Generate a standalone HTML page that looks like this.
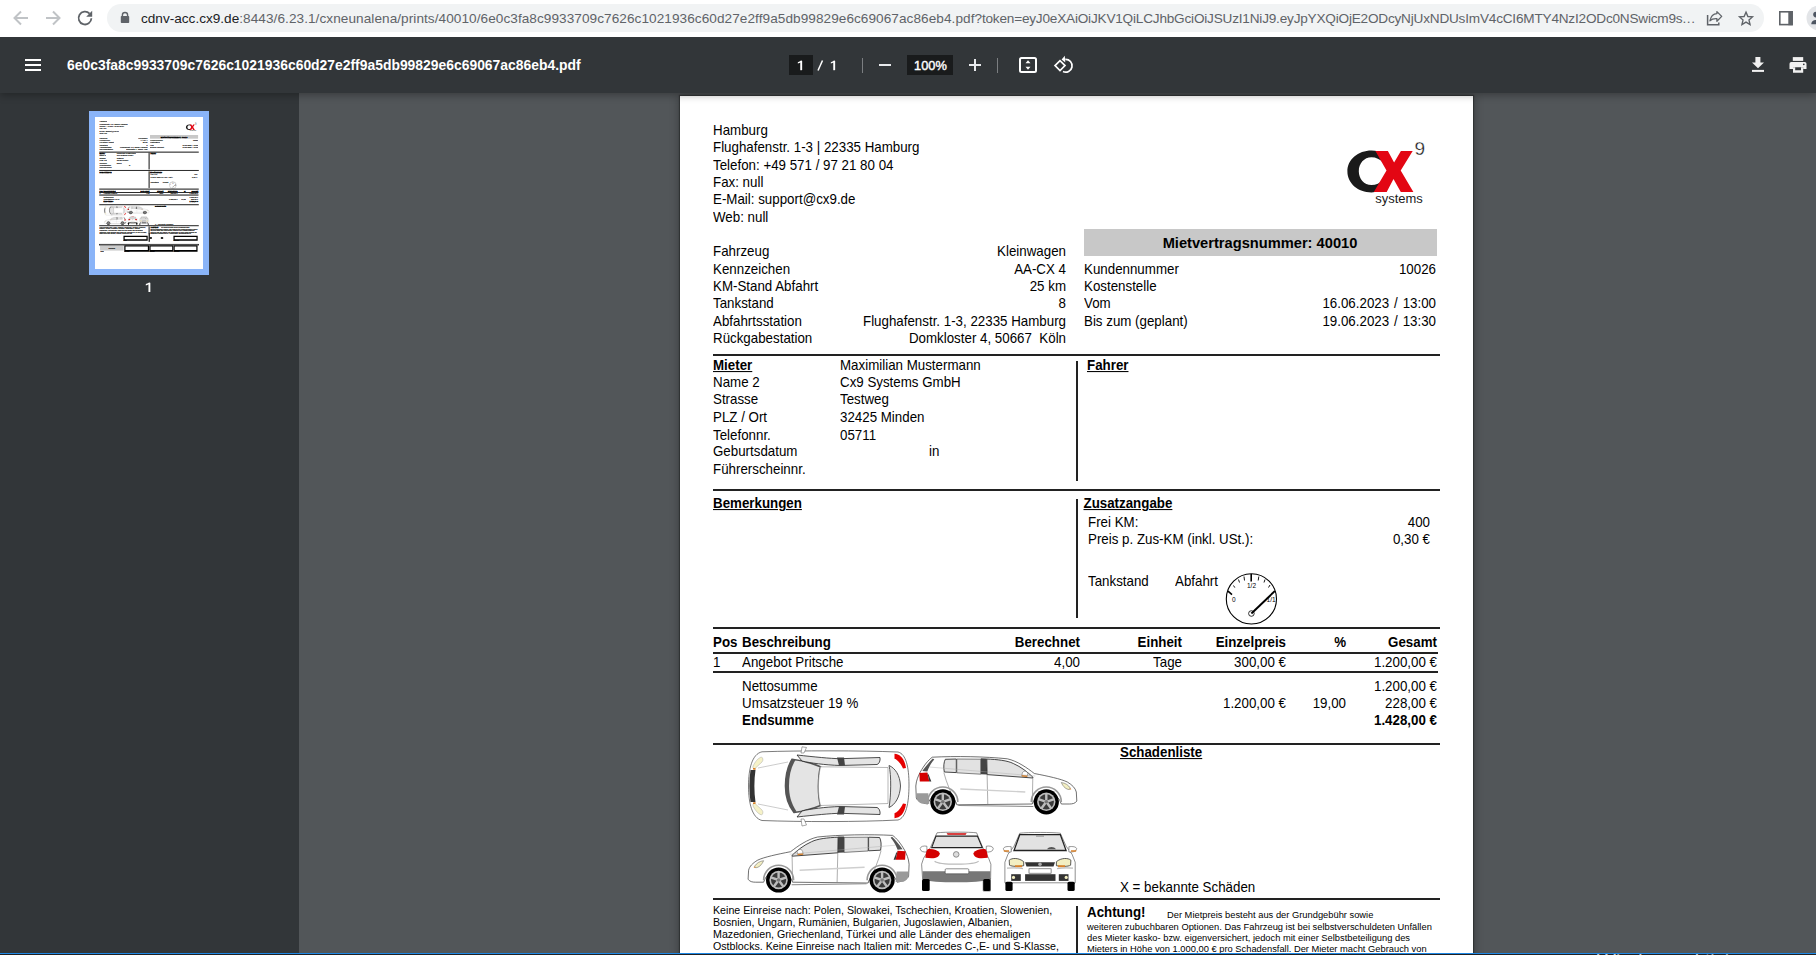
<!<div class="t" style="left:713px;top:123.62px;font-size:13.33px;font-weight:normal;color:#000;">Hamburg</div>
<div class="t" style="left:713px;top:141.06px;font-size:13.33px;font-weight:normal;color:#000;">Flughafenstr. 1-3 | 22335 Hamburg</div>
<div class="t" style="left:713px;top:158.50px;font-size:13.33px;font-weight:normal;color:#000;">Telefon: +49 571 / 97 21 80 04</div>
<div class="t" style="left:713px;top:175.94px;font-size:13.33px;font-weight:normal;color:#000;">Fax: null</div>
<div class="t" style="left:713px;top:193.38px;font-size:13.33px;font-weight:normal;color:#000;">E-Mail: support@cx9.de</div>
<div class="t" style="left:713px;top:210.82px;font-size:13.33px;font-weight:normal;color:#000;">Web: null</div>
<div class="t" style="left:713px;top:244.72px;font-size:13.33px;font-weight:normal;color:#000;">Fahrzeug</div>
<div class="t" style="right:750px;top:244.72px;font-size:13.33px;font-weight:normal;color:#000;">Kleinwagen</div>
<div class="t" style="left:713px;top:262.92px;font-size:13.33px;font-weight:normal;color:#000;">Kennzeichen</div>
<div class="t" style="right:750px;top:262.92px;font-size:13.33px;font-weight:normal;color:#000;">AA-CX 4</div>
<div class="t" style="left:713px;top:279.62px;font-size:13.33px;font-weight:normal;color:#000;">KM-Stand Abfahrt</div>
<div class="t" style="right:750px;top:279.62px;font-size:13.33px;font-weight:normal;color:#000;">25 km</div>
<div class="t" style="left:713px;top:297.02px;font-size:13.33px;font-weight:normal;color:#000;">Tankstand</div>
<div class="t" style="right:750px;top:297.02px;font-size:13.33px;font-weight:normal;color:#000;">8</div>
<div class="t" style="left:713px;top:315.22px;font-size:13.33px;font-weight:normal;color:#000;">Abfahrtsstation</div>
<div class="t" style="right:750px;top:315.22px;font-size:13.33px;font-weight:normal;color:#000;">Flughafenstr. 1-3, 22335 Hamburg</div>
<div class="t" style="left:713px;top:331.92px;font-size:13.33px;font-weight:normal;color:#000;">Rückgabestation</div>
<div class="t" style="right:750px;top:331.92px;font-size:13.33px;font-weight:normal;color:#000;">Domkloster 4, 50667&nbsp; Köln</div>
<div class="r" style="left:1084px;top:229px;width:353px;height:27px;background:#c8c8c8;"></div>
<div class="t" style="left:960px;width:600px;text-align:center;top:235.58px;font-size:14.67px;font-weight:bold;color:#000;">Mietvertragsnummer: 40010</div>
<div class="t" style="left:1084px;top:262.92px;font-size:13.33px;font-weight:normal;color:#000;">Kundennummer</div>
<div class="t" style="right:380px;top:262.92px;font-size:13.33px;font-weight:normal;color:#000;">10026</div>
<div class="t" style="left:1084px;top:279.62px;font-size:13.33px;font-weight:normal;color:#000;">Kostenstelle</div>
<div class="t" style="left:1084px;top:297.02px;font-size:13.33px;font-weight:normal;color:#000;">Vom</div>
<div class="t" style="right:380px;top:297.02px;font-size:13.33px;font-weight:normal;color:#000;word-spacing:1.2px;">16.06.2023 / 13:00</div>
<div class="t" style="left:1084px;top:315.22px;font-size:13.33px;font-weight:normal;color:#000;">Bis zum (geplant)</div>
<div class="t" style="right:380px;top:315.22px;font-size:13.33px;font-weight:normal;color:#000;word-spacing:1.2px;">19.06.2023 / 13:30</div>
<div class="r ln" style="left:713px;top:354px;width:727px;height:2px;background:#222;"></div>
<div class="t" style="left:713px;top:358.72px;font-size:13.33px;font-weight:bold;color:#000;text-decoration:underline;text-decoration-thickness:1px;text-underline-offset:1px;">Mieter</div>
<div class="t" style="left:840px;top:358.72px;font-size:13.33px;font-weight:normal;color:#000;">Maximilian Mustermann</div>
<div class="t" style="left:713px;top:376.12px;font-size:13.33px;font-weight:normal;color:#000;">Name 2</div>
<div class="t" style="left:840px;top:376.12px;font-size:13.33px;font-weight:normal;color:#000;">Cx9 Systems GmbH</div>
<div class="t" style="left:713px;top:392.62px;font-size:13.33px;font-weight:normal;color:#000;">Strasse</div>
<div class="t" style="left:840px;top:392.62px;font-size:13.33px;font-weight:normal;color:#000;">Testweg</div>
<div class="t" style="left:713px;top:411.02px;font-size:13.33px;font-weight:normal;color:#000;">PLZ / Ort</div>
<div class="t" style="left:840px;top:411.02px;font-size:13.33px;font-weight:normal;color:#000;">32425 Minden</div>
<div class="t" style="left:713px;top:428.52px;font-size:13.33px;font-weight:normal;color:#000;">Telefonnr.</div>
<div class="t" style="left:840px;top:428.52px;font-size:13.33px;font-weight:normal;color:#000;">05711</div>
<div class="t" style="left:713px;top:445.42px;font-size:13.33px;font-weight:normal;color:#000;">Geburtsdatum</div>
<div class="t" style="left:713px;top:463.32px;font-size:13.33px;font-weight:normal;color:#000;">Führerscheinnr.</div>
<div class="t" style="left:929px;top:445.42px;font-size:13.33px;font-weight:normal;color:#000;">in</div>
<div class="r ln" style="left:1076px;top:361px;width:2px;height:120px;background:#222;"></div>
<div class="t" style="left:1087px;top:358.72px;font-size:13.33px;font-weight:bold;color:#000;text-decoration:underline;text-decoration-thickness:1px;text-underline-offset:1px;">Fahrer</div>
<div class="r ln" style="left:713px;top:489px;width:727px;height:2px;background:#222;"></div>
<div class="t" style="left:713px;top:496.72px;font-size:13.33px;font-weight:bold;color:#000;text-decoration:underline;text-decoration-thickness:1px;text-underline-offset:1px;">Bemerkungen</div>
<div class="r ln" style="left:1076px;top:499px;width:2px;height:119px;background:#222;"></div>
<div class="t" style="left:1083.5px;top:496.72px;font-size:13.33px;font-weight:bold;color:#000;text-decoration:underline;text-decoration-thickness:1px;text-underline-offset:1px;">Zusatzangabe</div>
<div class="t" style="left:1088px;top:515.72px;font-size:13.33px;font-weight:normal;color:#000;">Frei KM:</div>
<div class="t" style="right:386px;top:515.72px;font-size:13.33px;font-weight:normal;color:#000;">400</div>
<div class="t" style="left:1088px;top:532.72px;font-size:13.33px;font-weight:normal;color:#000;">Preis p. Zus-KM (inkl. USt.):</div>
<div class="t" style="right:386px;top:532.72px;font-size:13.33px;font-weight:normal;color:#000;">0,30 €</div>
<div class="t" style="left:1088px;top:574.72px;font-size:13.33px;font-weight:normal;color:#000;">Tankstand</div>
<div class="t" style="left:1175px;top:574.72px;font-size:13.33px;font-weight:normal;color:#000;">Abfahrt</div>
<div class="r ln" style="left:713px;top:627px;width:727px;height:2px;background:#222;"></div>
<div class="t" style="left:713px;top:635.72px;font-size:13.33px;font-weight:bold;color:#000;">Pos</div>
<div class="t" style="left:742px;top:635.72px;font-size:13.33px;font-weight:bold;color:#000;">Beschreibung</div>
<div class="t" style="right:736px;top:635.72px;font-size:13.33px;font-weight:bold;color:#000;">Berechnet</div>
<div class="t" style="right:634px;top:635.72px;font-size:13.33px;font-weight:bold;color:#000;">Einheit</div>
<div class="t" style="right:530px;top:635.72px;font-size:13.33px;font-weight:bold;color:#000;">Einzelpreis</div>
<div class="t" style="right:470px;top:635.72px;font-size:13.33px;font-weight:bold;color:#000;">%</div>
<div class="t" style="right:379px;top:635.72px;font-size:13.33px;font-weight:bold;color:#000;">Gesamt</div>
<div class="r ln" style="left:713px;top:652px;width:725px;height:2px;background:#222;"></div>
<div class="t" style="left:713px;top:655.72px;font-size:13.33px;font-weight:normal;color:#000;">1</div>
<div class="t" style="left:742px;top:655.72px;font-size:13.33px;font-weight:normal;color:#000;">Angebot Pritsche</div>
<div class="t" style="right:736px;top:655.72px;font-size:13.33px;font-weight:normal;color:#000;">4,00</div>
<div class="t" style="right:634px;top:655.72px;font-size:13.33px;font-weight:normal;color:#000;">Tage</div>
<div class="t" style="right:530px;top:655.72px;font-size:13.33px;font-weight:normal;color:#000;">300,00 €</div>
<div class="t" style="right:379px;top:655.72px;font-size:13.33px;font-weight:normal;color:#000;">1.200,00 €</div>
<div class="r ln" style="left:713px;top:671px;width:725px;height:2px;background:#222;"></div>
<div class="t" style="left:742px;top:679.72px;font-size:13.33px;font-weight:normal;color:#000;">Nettosumme</div>
<div class="t" style="right:379px;top:679.72px;font-size:13.33px;font-weight:normal;color:#000;">1.200,00 €</div>
<div class="t" style="left:742px;top:696.72px;font-size:13.33px;font-weight:normal;color:#000;">Umsatzsteuer 19 %</div>
<div class="t" style="right:530px;top:696.72px;font-size:13.33px;font-weight:normal;color:#000;">1.200,00 €</div>
<div class="t" style="right:470px;top:696.72px;font-size:13.33px;font-weight:normal;color:#000;">19,00</div>
<div class="t" style="right:379px;top:696.72px;font-size:13.33px;font-weight:normal;color:#000;">228,00 €</div>
<div class="t" style="left:742px;top:713.72px;font-size:13.33px;font-weight:bold;color:#000;">Endsumme</div>
<div class="t" style="right:379px;top:713.72px;font-size:13.33px;font-weight:bold;color:#000;">1.428,00 €</div>
<div class="r ln" style="left:713px;top:743px;width:727px;height:2px;background:#222;"></div>
<div class="t" style="left:1120px;top:745.72px;font-size:13.33px;font-weight:bold;color:#000;text-decoration:underline;text-decoration-thickness:1px;text-underline-offset:1px;">Schadenliste</div>
<div class="t" style="left:1120px;top:880.72px;font-size:13.33px;font-weight:normal;color:#000;">X = bekannte Schäden</div>
<div class="r ln" style="left:713px;top:898px;width:727px;height:2px;background:#222;"></div>
<div class="t" style="left:713px;top:904.97px;font-size:10.67px;font-weight:normal;color:#000;">Keine Einreise nach: Polen, Slowakei, Tschechien, Kroatien, Slowenien,</div>
<div class="t" style="left:713px;top:916.87px;font-size:10.67px;font-weight:normal;color:#000;">Bosnien, Ungarn, Rumänien, Bulgarien, Jugoslawien, Albanien,</div>
<div class="t" style="left:713px;top:928.77px;font-size:10.67px;font-weight:normal;color:#000;">Mazedonien, Griechenland, Türkei und alle Länder des ehemaligen</div>
<div class="t" style="left:713px;top:940.67px;font-size:10.67px;font-weight:normal;color:#000;">Ostblocks. Keine Einreise nach Italien mit: Mercedes C-,E- und S-Klasse,</div>
<div class="r ln" style="left:1076px;top:906px;width:2px;height:49px;background:#222;"></div>
<div class="t" style="left:1087px;top:905.72px;font-size:13.33px;font-weight:bold;color:#000;">Achtung!</div>
<div class="t" style="left:1167px;top:911.10px;font-size:9.33px;font-weight:normal;color:#000;">Der Mietpreis besteht aus der Grundgebühr sowie</div>
<div class="t" style="left:1087px;top:923.10px;font-size:9.33px;font-weight:normal;color:#000;">weiteren zubuchbaren Optionen. Das Fahrzeug ist bei selbstverschuldeten Unfällen</div>
<div class="t" style="left:1087px;top:934.10px;font-size:9.33px;font-weight:normal;color:#000;">des Mieter kasko- bzw. eigenversichert, jedoch mit einer Selbstbeteiligung des</div>
<div class="t" style="left:1087px;top:945.10px;font-size:9.33px;font-weight:normal;color:#000;">Mieters in Höhe von 1.000,00 € pro Schadensfall. Der Mieter macht Gebrauch von</div>
<div class="t" style="left:713px;top:952.57px;font-size:10.67px;font-weight:normal;color:#000;">sowie Mercedes Sprinter, Porsche, BMW und Audi.</div>
<div class="t" style="left:1087px;top:955.10px;font-size:9.33px;font-weight:normal;color:#000;">zusätzlichen Leistungen wie z.B. Versicherungen, Navigationsgeräte etc.</div>
<div class="r" style="left:889px;top:972px;width:178px;height:38px;background:#fff;border:9px solid #000;border-bottom-width:12px"></div>
<div class="r" style="left:1256px;top:972px;width:178px;height:38px;background:#fff;border:9px solid #000;border-bottom-width:12px"></div>
<div class="r ln" style="left:1076px;top:955px;width:4px;height:60px;background:#222;"></div>
<div class="r ln" style="left:1084px;top:984px;width:12px;height:10px;background:#000;border-radius:6px"></div>
<div class="r ln" style="left:1165px;top:984px;width:14px;height:10px;background:#000;border-radius:3px"></div>
<div class="t" style="left:889px;top:1005.23px;font-size:8px;font-weight:normal;color:#000;">Datum</div>
<div class="t" style="left:1256px;top:1005.23px;font-size:8px;font-weight:normal;color:#000;">Unterschrift</div>
<div class="r ln" style="left:713px;top:1035px;width:727px;height:7px;background:#222;"></div>
<div class="r" style="left:717px;top:1046px;width:173px;height:36px;background:#cccccc;"></div>
<div class="t" style="left:503px;width:600px;text-align:center;top:1058.97px;font-size:10.67px;font-weight:normal;color:#000;">Rückgabe</div>
<div class="r" style="left:895px;top:1043px;width:182px;height:48px;background:#fff;border:9px solid #000;border-bottom-width:13px"></div>
<div class="r" style="left:1079px;top:1043px;width:177px;height:48px;background:#fff;border:9px solid #000;border-bottom-width:13px"></div>
<div class="r" style="left:1256px;top:1043px;width:177px;height:48px;background:#fff;border:9px solid #000;border-bottom-width:13px"></div>
<div class="t" style="left:720px;top:1088.23px;font-size:8px;font-weight:normal;color:#000;">Datum</div>
<div class="t" style="left:897px;top:1088.23px;font-size:8px;font-weight:normal;color:#000;">KM-Stand</div>
<div class="t" style="left:1081px;top:1088.23px;font-size:8px;font-weight:normal;color:#000;">Tankstand</div>
<div class="t" style="left:1258px;top:1088.23px;font-size:8px;font-weight:normal;color:#000;">Unterschrift</div>
<svg style="position:absolute;left:1340px;top:135px" width="90" height="75" viewBox="0 0 90 75">
  <path fill-rule="evenodd" fill="#1a1a1a" d="M31.5 15.6 C18 15.6 7.4 24.6 7.4 36.5 C7.4 48.4 18 57.4 31.5 57.4 C36 57.4 40 56.4 43 54.6 L43 18.4 C40 16.6 36 15.6 31.5 15.6 Z M31.5 22.3 C24 22.3 18.8 28.6 18.8 36.2 C18.8 43.8 24 50 31.5 50 C36 50 40 48 43 45 L43 27.4 C40 24.3 36 22.3 31.5 22.3 Z"/>
  <path fill="#e30613" d="M35.4 16.1 H47.9 L54.1 27.4 L60.9 16.1 H72.7 L60.7 35.4 L73.4 57 H60.8 L53.5 44 L46.7 57 H33.8 L46.5 35.6 Z"/>
  <text x="74.6" y="20" font-family="Liberation Sans" font-size="19" fill="#1a1a1a" stroke="#fff" stroke-width="0.3">9</text>
  <text x="35.3" y="67.6" font-family="Liberation Sans" font-size="13" fill="#1a1a1a" textLength="47.5" lengthAdjust="spacingAndGlyphs">systems</text>
</svg>
<svg style="position:absolute;left:1220px;top:568px" width="65" height="60" viewBox="0 0 65 60">
  <circle cx="31.4" cy="30.9" r="25.1" fill="none" stroke="#000" stroke-width="1.1"/>
  <g stroke="#000" stroke-linecap="butt">
    <line x1="31.2" y1="6" x2="31.2" y2="13.5" stroke-width="1.6"/>
    <line x1="8" y1="23.2" x2="12" y2="26.7" stroke-width="1.6"/>
    <line x1="13.5" y1="17.5" x2="14.8" y2="19.6" stroke-width="0.9"/>
    <line x1="18.5" y1="11.5" x2="19.5" y2="14.5" stroke-width="0.9"/>
    <line x1="24" y1="8.5" x2="24.5" y2="12.5" stroke-width="0.9"/>
    <line x1="38.8" y1="8.5" x2="38.2" y2="12.5" stroke-width="0.9"/>
    <line x1="45" y1="11.5" x2="44" y2="14.5" stroke-width="0.9"/>
    <line x1="50" y1="17" x2="48.5" y2="19.5" stroke-width="0.9"/>
    <line x1="31.4" y1="45.5" x2="55" y2="22.9" stroke-width="2"/>
  </g>
  <circle cx="31.4" cy="45.5" r="2.8" fill="none" stroke="#000" stroke-width="0.8"/>
  <text x="27" y="19.6" font-family="Liberation Sans" font-size="6.5" fill="#000">1/2</text>
  <text x="12" y="33.5" font-family="Liberation Sans" font-size="6.5" fill="#000">0</text>
  <text x="46.6" y="33.8" font-family="Liberation Sans" font-size="6.5" fill="#000">1/1</text>
</svg>
<svg style="position:absolute;left:740px;top:745px" width="345" height="155" viewBox="0 0 345 155">
<defs>
  <g id="side">
    <!-- side view facing right, local 162x59 -->
    <path d="M17 2.2 C40 1 70 1.5 92 3.8 C102 6 112 13 119 18.5 C132 21 146 24 152 27 C157 30 160 33 161 37 L161.5 46 C160 48.5 157 49 154 49 L146 49 A15 15 0 0 0 117 49 L41.5 49.8 A15 15 0 0 0 13 47.5 L12.5 49 C6 48 2 46 1 43 L0.5 31 C1 25 3 21 5 17 C9 10 13 5 17 2.2 Z" fill="#fff" stroke="#333" stroke-width="0.7"/>
    <path d="M1.2 38.2 L13 38.2 L14 48.8 L6 48.5 C3 47 1.5 45 1.2 42 Z" fill="#9a9a9a"/>
    <path d="M17.5 3.5 C14 7 10 12 7 16 L12 16.5 C14 11 16.5 7 19 4.5Z" fill="#555"/>
    <path d="M4 18 L12 17.5 L14 26.6 L4.5 26.6 Z" fill="#d40000"/>
    <path d="M12 17.5 L14 26.6 L16 26.6 L13.5 20Z" fill="#333"/>
    <path d="M30 4.3 L41 4 L41 17.6 L29 17 C28 12 28.5 7 30 4.3Z" fill="#e2e2e2" stroke="#333" stroke-width="0.9"/>
    <path d="M41.5 4 L65.5 4.2 L65.5 19.2 L41.5 17.8 Z" fill="#e2e2e2" stroke="#333" stroke-width="0.6"/>
    <path d="M65.5 3.2 L71.5 3.4 L71.8 19.6 L65.5 19.2Z" fill="#444"/>
    <path d="M71.5 4 C82 4.5 92 5.5 98 8.5 C106 12 112 17 117.5 22 L117.5 23 L71.8 19.6 Z" fill="#e2e2e2" stroke="#333" stroke-width="0.9"/>
    <path d="M107 18 C108 15.5 111.5 15.5 112.5 18.5 L112 21 L106.5 21Z" fill="#fff" stroke="#555" stroke-width="0.5"/>
    <path d="M106.5 20 L112 20.5 L112 22 L106.5 21.5Z" fill="#d9822b"/>
    <path d="M28.5 17.5 C31 27 36 40 41.5 49" fill="none" stroke="#777" stroke-width="0.6"/>
    <path d="M71.8 19.6 L72.5 49" fill="none" stroke="#777" stroke-width="0.6"/>
    <path d="M117.5 22.5 L117 49" fill="none" stroke="#777" stroke-width="0.6"/>
    <path d="M45 34 L110 37" stroke="#cfcfcf" stroke-width="1.4"/>
    <path d="M14 12 L120 21" stroke="#aaa" stroke-width="0.4"/>
    <path d="M146 27.5 C150 28 153 30 155 33 L154 34.5 C151 34.5 148 32 146 27.5Z" fill="#f3efc2" stroke="#555" stroke-width="0.5"/>
    <path d="M155 33 L156 34.5 L154 34.5Z" fill="#d9822b"/>
    <path d="M43 50.5 L118 51.5" stroke="#888" stroke-width="1.1"/>
    <path d="M12.5 47 A15 15 0 0 1 42.5 47" fill="none" stroke="#9a9a9a" stroke-width="1.6"/>
    <path d="M116 47 A15 15 0 0 1 146 47" fill="none" stroke="#9a9a9a" stroke-width="1.6"/>
    <circle cx="27.5" cy="46.8" r="12.6" fill="#000"/>
    <circle cx="27.5" cy="46.8" r="9.2" fill="#bdbdbd"/>
    <circle cx="27.5" cy="46.8" r="7.6" fill="#3a3a3a"/>
    <g stroke="#bdbdbd" stroke-width="2.4"><path d="M27.5 46.8 L27.5 38.5 M27.5 46.8 L35.4 44.2 M27.5 46.8 L32.4 53.5 M27.5 46.8 L22.6 53.5 M27.5 46.8 L19.6 44.2"/></g>
    <circle cx="27.5" cy="46.8" r="1.8" fill="#777"/>
    <circle cx="131" cy="46.8" r="12.6" fill="#000"/>
    <circle cx="131" cy="46.8" r="9.2" fill="#bdbdbd"/>
    <circle cx="131" cy="46.8" r="7.6" fill="#3a3a3a"/>
    <g stroke="#bdbdbd" stroke-width="2.4"><path d="M131 46.8 L131 38.5 M131 46.8 L138.9 44.2 M131 46.8 L135.9 53.5 M131 46.8 L126.1 53.5 M131 46.8 L123.1 44.2"/></g>
    <circle cx="131" cy="46.8" r="1.8" fill="#777"/>
  </g>
</defs>
<!-- top view -->
<g transform="translate(0,0)">
  <path d="M22 6.8 C60 5.5 120 5.5 158 7 C166 9 169 22 169 40 C169 58 166 73 158 75 C120 77 60 77 22 75.5 C12 73 8.5 58 8.5 41 C8.5 24 12 9 22 6.8Z" fill="#fff" stroke="#444" stroke-width="0.7"/>
  <path d="M62 1.8 L66.5 2.5 L64 8 L61 8Z" fill="#fff" stroke="#555" stroke-width="0.5"/>
  <path d="M62 81 L66.5 80 L64 74 L61 74Z" fill="#fff" stroke="#555" stroke-width="0.5"/>
  <path d="M52 14.3 C62 15.5 72 18 80.5 21.8 C78 32 77.5 50 80.5 60.5 C72 64 62 66.5 54 67.5 C48 60 45.5 50 45.5 41 C45.5 30 48 21 52 14.3Z" fill="#e4e4e4" stroke="#555" stroke-width="1.6"/>
  <path d="M52 14.3 C48 21 45.5 30 45.5 41 C45.5 50 48 60 54 67.5 L56.5 66.5 C51 58 49 50 49 41 C49 31 51 22 55.5 15Z" fill="#555"/>
  <path d="M80.5 21.8 L148 22.5 L148 58.5 L80.5 60.5 C77.5 50 78 32 80.5 21.8Z" fill="#fff" stroke="#888" stroke-width="0.6"/>
  <path d="M57 10 C75 12 90 13.5 100 13.7 L140 12.5 C140.5 16 139 19 137 19.5 L100 20.5 C85 20 70 18 62 16 Z" fill="#e4e4e4" stroke="#222" stroke-width="0.8"/>
  <path d="M97 12.5 L104 12.5 L105 20.5 L99 20.5Z" fill="#444"/>
  <path d="M57 72 C75 70 90 68.5 100 68.3 L140 69.5 C140.5 66 139 63 137 62.5 L100 61.5 C85 62 70 64 62 66 Z" fill="#e4e4e4" stroke="#222" stroke-width="0.8"/>
  <path d="M97 69.5 L104 69.5 L105 61.5 L99 61.5Z" fill="#444"/>
  <path d="M149 20.5 C155 23 160 30 160.5 41 C160 52 155 60 149 62.5 C151 52 151.5 30 149 20.5Z" fill="#e4e4e4" stroke="#555" stroke-width="1"/>
  <path d="M154.5 8.8 C160 9.3 164.5 13 166 23 L163 23.5 C160.5 18 157 14.5 154.5 13.8Z" fill="#e60000"/>
  <path d="M154.5 73.2 C160 72.7 164.5 69 166 59 L163 58.5 C160.5 64 157 67.5 154.5 68.2Z" fill="#e60000"/>
  <path d="M21.5 12 C23 13 23.5 15 22 17 L15 23.5 C13.5 24 12.5 23 13 21 C15 17 18 13 21.5 12Z" fill="#f6f2c8" stroke="#999" stroke-width="0.4"/>
  <path d="M21.5 70 C23 69 23.5 67 22 65 L15 58.5 C13.5 58 12.5 59 13 61 C15 65 18 69 21.5 70Z" fill="#f6f2c8" stroke="#999" stroke-width="0.4"/>
  <path d="M13 23 L15.5 23 L15.5 25 L13 24.5Z" fill="#d9822b"/>
  <path d="M13 59 L15.5 59 L15.5 57 L13 57.5Z" fill="#d9822b"/>
  <path d="M10.5 25 C9 35 9 47 10.5 57 L15.5 57 C14 47 14 35 15.5 25Z" fill="#333"/>
  <path d="M18 23 L48 17 M18 59 L48 65" stroke="#999" stroke-width="0.5"/>
</g>
<!-- side view top right -->
<use href="#side" transform="translate(175.3,10)"/>
<!-- side view bottom left (mirrored) -->
<use href="#side" transform="translate(169.6,88.2) scale(-1,1)"/>
<!-- rear view -->
<g transform="translate(179.6,87.2)">
  <path d="M17.4 0.6 C25 -0.3 50 -0.3 57 0.6 L63 15 L69 26 L71.3 32 L71 46.7 L63.6 46.7 L63.6 58.8 L70.8 58.8 L70.8 46.7 L3 46.7 L2 32 L4 26 L11 15Z" fill="#fff" stroke="#444" stroke-width="0.6"/>
  <path d="M16.4 3.9 L57.8 3.9 L62.7 15.4 L12.1 15.4Z" fill="#e2e2e2" stroke="#222" stroke-width="1.1"/>
  <path d="M27 1 L47 1 L46 2.5 L28 2.5Z" fill="#c00"/>
  <path d="M0.5 16.5 C1 14 4 13.5 7.3 14 L7.3 19.8 C4 20 1 19.5 0.5 16.5Z" fill="#fff" stroke="#555" stroke-width="0.6"/>
  <path d="M73.7 16.5 C73.2 14 70.2 13.5 66.7 14 L66.7 19.8 C70.2 20 73.2 19.5 73.7 16.5Z" fill="#fff" stroke="#555" stroke-width="0.6"/>
  <path d="M8 17 C13 16.5 18 17.5 20.3 21 C20 24 17 26 12 26 L5.8 25.5 C6 22 6.5 19 8 17Z" fill="#d40000"/>
  <path d="M66 17 C61 16.5 56 17.5 53.7 21 C54 24 57 26 62 26 L68.2 25.5 C68 22 67.5 19 66 17Z" fill="#d40000"/>
  <path d="M2.9 39 L70.8 39 L70.5 47 C65 49.5 50 50 37 50 C22 50 8 49.5 3 47Z" fill="#777"/>
  <path d="M15 29 C20 33 55 33 59 29" fill="none" stroke="#bbb" stroke-width="1.2"/>
  <rect x="25.6" y="36.6" width="23.6" height="5" rx="1" fill="#fff" stroke="#444" stroke-width="0.6"/>
  <circle cx="36.6" cy="22.2" r="2.8" fill="#ddd" stroke="#777" stroke-width="0.8"/>
  <rect x="2.4" y="46.7" width="7.7" height="12.1" rx="1.5" fill="#000"/>
  <rect x="63.6" y="46.7" width="7.2" height="12.1" rx="1.5" fill="#000"/>
</g>
<!-- front view -->
<g transform="translate(263,87.2)">
  <path d="M16.8 1 C25 0 50 0 57.3 1 L63.1 14 L69 22 L72.2 30 L72.2 50.6 L1.9 50.6 L1.9 30 L5 22 L11 14Z" fill="#fff" stroke="#444" stroke-width="0.6"/>
  <path d="M16.8 2.4 L57.3 2.4 L63.1 18.3 L11 18.3Z" fill="#e2e2e2" stroke="#222" stroke-width="1.3"/>
  <path d="M44 17 C46 14 51 14 53 17Z" fill="#555"/>
  <rect x="33" y="3" width="8" height="1.5" fill="#999"/>
  <path d="M0.4 16.5 C1 14.5 4 14 8.2 14.5 L8.2 19.8 C4 20 1 19.5 0.4 16.5Z" fill="#fff" stroke="#555" stroke-width="0.6"/>
  <path d="M73.7 16.5 C73.1 14.5 70.1 14 65.9 14.5 L65.9 19.8 C70.1 20 73.1 19.5 73.7 16.5Z" fill="#fff" stroke="#555" stroke-width="0.6"/>
  <path d="M0.5 18 L6 18 L6 19.5 L1 19.5Z" fill="#d9822b"/>
  <path d="M73.5 18 L68 18 L68 19.5 L73 19.5Z" fill="#d9822b"/>
  <path d="M6.2 28 C9 25.5 16 25.5 20.7 29.5 L20.7 33.5 C16 34.5 9 34.5 6.5 33Z" fill="#f3efc2" stroke="#333" stroke-width="0.8"/>
  <path d="M67.9 28 C65.1 25.5 58.1 25.5 53.4 29.5 L53.4 33.5 C58.1 34.5 65.1 34.5 67.6 33Z" fill="#f3efc2" stroke="#333" stroke-width="0.8"/>
  <path d="M12 33 L19 33 L19 35 L12 35Z M55 33 L62 33 L62 35 L55 35Z" fill="#d9822b"/>
  <path d="M22.1 30 L52 30 L50.5 34.2 L23.5 34.2Z" fill="#333"/>
  <circle cx="37" cy="32" r="1.8" fill="#aaa"/>
  <path d="M4 36 C10 35.5 15 35.5 20 36.5 M54 36.5 C59 35.5 64 35.5 70 36" stroke="#bbb" stroke-width="1.2" fill="none"/>
  <rect x="26" y="36.6" width="22.1" height="4.4" fill="#fff" stroke="#444" stroke-width="0.6"/>
  <rect x="22.1" y="42" width="30.4" height="6.7" fill="#333"/>
  <rect x="8.2" y="42" width="9.6" height="6.7" fill="#333"/>
  <rect x="55.8" y="42" width="9.7" height="6.7" fill="#333"/>
  <circle cx="10.5" cy="45.2" r="1.6" fill="#f3efc2"/>
  <circle cx="63.2" cy="45.2" r="1.6" fill="#f3efc2"/>
  <rect x="2.4" y="49.6" width="7.2" height="9.2" rx="1.5" fill="#000"/>
  <rect x="64.5" y="49.6" width="7.2" height="9.2" rx="1.5" fill="#000"/>
</g>
</svg>
TYPE html>
<html><head><meta charset="utf-8"><title>PDF</title>
<style>
*{margin:0;padding:0;box-sizing:border-box}
html,body{width:1816px;height:955px;overflow:hidden;background:#525659;font-family:"Liberation Sans",sans-serif}
.abs{position:absolute}
.t{position:absolute;white-space:pre;line-height:1;font-family:"Liberation Sans",sans-serif;transform:scaleY(1.05);transform-origin:0 0.8465em}
.r{position:absolute}
#chrome{position:absolute;left:0;top:0;width:1816px;height:37px;background:#fff;z-index:8}
#pill{position:absolute;left:107px;top:4px;width:1657px;height:28px;border-radius:14px;background:#f1f3f4}
#url{position:absolute;left:141px;top:9.7px;font-size:13.6px;line-height:18px;color:#5f6368;white-space:nowrap;transform-origin:0 0}
#url b{font-weight:normal;color:#202124}
#tb{position:absolute;left:0;top:37px;width:1816px;height:56px;background:#323639;z-index:5;box-shadow:0 2px 8px rgba(0,0,0,.32)}
#side{position:absolute;left:0;top:93px;width:299px;height:862px;background:#323639}
#main{position:absolute;left:299px;top:93px;width:1517px;height:862px;background:#525659;overflow:hidden}
#page{position:absolute;left:680px;top:96px;width:793px;height:1122px;background:#fff;overflow:hidden;box-shadow:0 0 1px 1px rgba(0,0,0,.3),0 0 9px 1px rgba(0,0,0,.28)}
#title{position:absolute;left:67px;top:57px;font-size:13.9px;font-weight:bold;color:#fff;line-height:16px;white-space:nowrap}
.ibox{position:absolute;top:55px;height:20px;background:#191b1c}
.tbt{position:absolute;color:#fff;font-size:13px;line-height:14px;white-space:nowrap}
#thumb .t{-webkit-text-stroke:0.7px #000}
#thumb .t[style*="font-weight:bold"]{-webkit-text-stroke:2.2px #000}
#thumb .ln{box-shadow:0 0 0 2px #000}
.sep{position:absolute;top:58px;width:1px;height:15px;background:#7b7e81}
</style></head>
<body>
<div id="chrome">
  <svg class="abs" style="left:0;top:0" width="110" height="37" viewBox="0 0 110 37">
    <g fill="none" stroke="#c0c3c6" stroke-width="2">
      <path d="M28 18H15M21 11.5L14.5 18L21 24.5"/>
      <path d="M46 18H59M53 11.5L59.5 18L53 24.5"/>
    </g>
    <path d="M91.4 18.3 A6.4 6.4 0 1 1 89.6 13.6" fill="none" stroke="#5f6368" stroke-width="1.8"/>
    <path d="M92.2 10.8 V16.8 H86.2 Z" fill="#5f6368"/>
  </svg>
  <div id="pill"></div>
  <svg class="abs" style="left:119px;top:10px" width="12" height="14" viewBox="0 0 12 14">
    <path d="M3.4 6.4V5.1a2.6 2.6 0 0 1 5.2 0V6.4" fill="none" stroke="#5f6368" stroke-width="1.4"/>
    <rect x="1.8" y="6" width="8.4" height="7" rx="0.8" fill="#5f6368"/>
  </svg>
  <div id="url"><b>cdnv-acc.cx9.de</b><span style="letter-spacing:0.065px">:8443/6.23.1/cxneunalena/prints/40010/6e0c3fa8c9933709c7626c1021936c60d27e2ff9a5db99829e6c69067ac86eb4.pdf</span><span style="letter-spacing:-0.2px">?token=eyJ0eXAiOiJKV1QiLCJhbGciOiJSUzI1NiJ9.eyJpYXQiOjE2ODcyNjUxNDUsImV4cCI6MTY4NzI2ODc0NSwicm9s</span><span style="letter-spacing:0.6px">...</span></div>
  <svg class="abs" style="left:1700px;top:6px" width="116" height="26" viewBox="0 0 116 26">
    <g fill="none" stroke="#5f6368" stroke-width="1.5">
      <path d="M7.6 9.1V18.7H18.8V16.4"/>
      <path d="M9.9 14.8C10.8 10.5 13.5 7.8 16.9 7.6V5.6L21.7 10.4L16.9 15.2V12.6C13.8 12.4 11.5 13.2 9.9 14.8Z" stroke-width="1.3" stroke-linejoin="round"/>
      <path d="M46 5.4L48.1 10.3L53.2 10.7L49.3 14.1L50.5 19.2L46 16.5L41.5 19.2L42.7 14.1L38.8 10.7L43.9 10.3Z" transform="translate(46 12.6) scale(0.9) translate(-46 -12.6)"/>
    </g>
    <rect x="79.8" y="5.8" width="12.3" height="12.8" fill="none" stroke="#5f6368" stroke-width="1.6"/>
    <rect x="88.3" y="5" width="4.5" height="14.2" fill="#5f6368"/>
    <circle cx="119" cy="12" r="12.5" fill="#e3e5e8"/>
    <circle cx="116" cy="8.6" r="2.8" fill="#4d5561"/>
    <path d="M111.3 18.2c0-3.2 2.6-4.3 5-4.3s5 1.1 5 4.3z" fill="#4d5561"/>
  </svg>
</div>

<div id="tb">
  <svg class="abs" style="left:0;top:0" width="60" height="56" viewBox="0 0 60 56">
    <g fill="#fff"><rect x="25" y="22" width="16" height="2"/><rect x="25" y="27" width="16" height="2"/><rect x="25" y="32" width="16" height="2"/></g>
  </svg>
</div>
<div id="title" style="z-index:6">6e0c3fa8c9933709c7626c1021936c60d27e2ff9a5db99829e6c69067ac86eb4.pdf</div>
<div style="position:absolute;left:0;top:0;z-index:6">
  <div class="ibox" style="left:789px;width:24px"></div>
  <svg class="abs" style="left:796px;top:60px" width="9" height="11" viewBox="0 0 9 11"><path d="M5.2 0.8V10.2" stroke="#fff" stroke-width="1.9"/><path d="M5.6 0.6L1.8 2.2V3.6L5.6 2.2Z" fill="#fff"/></svg>
  <svg class="abs" style="left:816px;top:60px" width="9" height="11" viewBox="0 0 9 11"><path d="M6.5 0.5L2 10.5" stroke="#fff" stroke-width="1.5"/></svg>
  <svg class="abs" style="left:829px;top:60px" width="9" height="11" viewBox="0 0 9 11"><path d="M5.2 0.8V10.2" stroke="#fff" stroke-width="1.9"/><path d="M5.6 0.6L1.8 2.2V3.6L5.6 2.2Z" fill="#fff"/></svg>
  <div class="sep" style="left:862px"></div>
  <div class="r" style="left:879px;top:64px;width:12px;height:2px;background:#e8eaed"></div>
  <div class="ibox" style="left:907px;width:46px"></div>
  <div class="tbt" style="left:914px;top:59px;font-weight:normal;font-size:12.8px;letter-spacing:0.05px;-webkit-text-stroke:0.4px #fff">100%</div>
  <div class="r" style="left:969px;top:64px;width:12px;height:2px;background:#e8eaed"></div>
  <div class="r" style="left:974px;top:59px;width:2px;height:12px;background:#e8eaed"></div>
  <div class="sep" style="left:997px"></div>
  <svg class="abs" style="left:1015px;top:53px" width="64" height="24" viewBox="0 0 64 24">
    <rect x="5" y="5" width="16" height="14" rx="1.5" fill="none" stroke="#fff" stroke-width="2"/>
    <path d="M13 7.3L15.5 10.3H10.5Z M13 16.7L15.5 13.7H10.5Z" fill="#fff"/>
    <path d="M40 12.6 L45 7.6 L50 12.6 L45 17.6 Z" fill="none" stroke="#fff" stroke-width="1.7"/>
    <path d="M48 18.6 A6.4 6.4 0 1 0 50.3 6.4" fill="none" stroke="#fff" stroke-width="1.7"/>
    <path d="M49.8 2.8 L46.6 6.6 L50.3 9.6 Z" fill="#fff"/>
  </svg>
  <svg class="abs" style="left:1745px;top:53px" width="66" height="24" viewBox="0 0 66 24">
    <path d="M10.4 4H15.4V9.4H19L13 15.3L7 9.4H10.4Z" fill="#f1f1f1"/>
    <rect x="7" y="16.9" width="12" height="2" fill="#f1f1f1"/>
    <rect x="47.8" y="4.1" width="10.4" height="3.8" fill="#f1f1f1"/>
    <path d="M46.3 9H59.7A1.8 1.8 0 0 1 61.5 10.8V16H58.2V14.2H48V16H44.5V10.8A1.8 1.8 0 0 1 46.3 9Z" fill="#f1f1f1"/>
    <path d="M48 14.2H58.2V19.8H48Z M50.2 14.2V17.3H56V14.2Z" fill="#f1f1f1" fill-rule="evenodd"/>
    <circle cx="58.8" cy="11.3" r="0.85" fill="#323639"/>
  </svg>
</div>

<div id="side">
  <div class="r" style="left:89px;top:18px;width:120px;height:164px;background:#8ab4f8"></div>
  <div class="r" style="left:95px;top:24px;width:108px;height:152px;background:#fff;overflow:hidden" id="thumb"><div style="position:absolute;left:0;top:0;width:793px;height:1122px;transform:scale(0.13619,0.13547);transform-origin:0 0"><div style="position:absolute;left:-680px;top:-96px;width:1816px;height:1300px"><div class="t" style="left:713px;top:123.62px;font-size:13.33px;font-weight:normal;color:#000;">Hamburg</div>
<div class="t" style="left:713px;top:141.06px;font-size:13.33px;font-weight:normal;color:#000;">Flughafenstr. 1-3 | 22335 Hamburg</div>
<div class="t" style="left:713px;top:158.50px;font-size:13.33px;font-weight:normal;color:#000;">Telefon: +49 571 / 97 21 80 04</div>
<div class="t" style="left:713px;top:175.94px;font-size:13.33px;font-weight:normal;color:#000;">Fax: null</div>
<div class="t" style="left:713px;top:193.38px;font-size:13.33px;font-weight:normal;color:#000;">E-Mail: support@cx9.de</div>
<div class="t" style="left:713px;top:210.82px;font-size:13.33px;font-weight:normal;color:#000;">Web: null</div>
<div class="t" style="left:713px;top:244.72px;font-size:13.33px;font-weight:normal;color:#000;">Fahrzeug</div>
<div class="t" style="right:750px;top:244.72px;font-size:13.33px;font-weight:normal;color:#000;">Kleinwagen</div>
<div class="t" style="left:713px;top:262.92px;font-size:13.33px;font-weight:normal;color:#000;">Kennzeichen</div>
<div class="t" style="right:750px;top:262.92px;font-size:13.33px;font-weight:normal;color:#000;">AA-CX 4</div>
<div class="t" style="left:713px;top:279.62px;font-size:13.33px;font-weight:normal;color:#000;">KM-Stand Abfahrt</div>
<div class="t" style="right:750px;top:279.62px;font-size:13.33px;font-weight:normal;color:#000;">25 km</div>
<div class="t" style="left:713px;top:297.02px;font-size:13.33px;font-weight:normal;color:#000;">Tankstand</div>
<div class="t" style="right:750px;top:297.02px;font-size:13.33px;font-weight:normal;color:#000;">8</div>
<div class="t" style="left:713px;top:315.22px;font-size:13.33px;font-weight:normal;color:#000;">Abfahrtsstation</div>
<div class="t" style="right:750px;top:315.22px;font-size:13.33px;font-weight:normal;color:#000;">Flughafenstr. 1-3, 22335 Hamburg</div>
<div class="t" style="left:713px;top:331.92px;font-size:13.33px;font-weight:normal;color:#000;">Rückgabestation</div>
<div class="t" style="right:750px;top:331.92px;font-size:13.33px;font-weight:normal;color:#000;">Domkloster 4, 50667&nbsp; Köln</div>
<div class="r" style="left:1084px;top:229px;width:353px;height:27px;background:#c8c8c8;"></div>
<div class="t" style="left:960px;width:600px;text-align:center;top:235.58px;font-size:14.67px;font-weight:bold;color:#000;">Mietvertragsnummer: 40010</div>
<div class="t" style="left:1084px;top:262.92px;font-size:13.33px;font-weight:normal;color:#000;">Kundennummer</div>
<div class="t" style="right:380px;top:262.92px;font-size:13.33px;font-weight:normal;color:#000;">10026</div>
<div class="t" style="left:1084px;top:279.62px;font-size:13.33px;font-weight:normal;color:#000;">Kostenstelle</div>
<div class="t" style="left:1084px;top:297.02px;font-size:13.33px;font-weight:normal;color:#000;">Vom</div>
<div class="t" style="right:380px;top:297.02px;font-size:13.33px;font-weight:normal;color:#000;word-spacing:1.2px;">16.06.2023 / 13:00</div>
<div class="t" style="left:1084px;top:315.22px;font-size:13.33px;font-weight:normal;color:#000;">Bis zum (geplant)</div>
<div class="t" style="right:380px;top:315.22px;font-size:13.33px;font-weight:normal;color:#000;word-spacing:1.2px;">19.06.2023 / 13:30</div>
<div class="r ln" style="left:713px;top:354px;width:727px;height:2px;background:#222;"></div>
<div class="t" style="left:713px;top:358.72px;font-size:13.33px;font-weight:bold;color:#000;text-decoration:underline;text-decoration-thickness:1px;text-underline-offset:1px;">Mieter</div>
<div class="t" style="left:840px;top:358.72px;font-size:13.33px;font-weight:normal;color:#000;">Maximilian Mustermann</div>
<div class="t" style="left:713px;top:376.12px;font-size:13.33px;font-weight:normal;color:#000;">Name 2</div>
<div class="t" style="left:840px;top:376.12px;font-size:13.33px;font-weight:normal;color:#000;">Cx9 Systems GmbH</div>
<div class="t" style="left:713px;top:392.62px;font-size:13.33px;font-weight:normal;color:#000;">Strasse</div>
<div class="t" style="left:840px;top:392.62px;font-size:13.33px;font-weight:normal;color:#000;">Testweg</div>
<div class="t" style="left:713px;top:411.02px;font-size:13.33px;font-weight:normal;color:#000;">PLZ / Ort</div>
<div class="t" style="left:840px;top:411.02px;font-size:13.33px;font-weight:normal;color:#000;">32425 Minden</div>
<div class="t" style="left:713px;top:428.52px;font-size:13.33px;font-weight:normal;color:#000;">Telefonnr.</div>
<div class="t" style="left:840px;top:428.52px;font-size:13.33px;font-weight:normal;color:#000;">05711</div>
<div class="t" style="left:713px;top:445.42px;font-size:13.33px;font-weight:normal;color:#000;">Geburtsdatum</div>
<div class="t" style="left:713px;top:463.32px;font-size:13.33px;font-weight:normal;color:#000;">Führerscheinnr.</div>
<div class="t" style="left:929px;top:445.42px;font-size:13.33px;font-weight:normal;color:#000;">in</div>
<div class="r ln" style="left:1076px;top:361px;width:2px;height:120px;background:#222;"></div>
<div class="t" style="left:1087px;top:358.72px;font-size:13.33px;font-weight:bold;color:#000;text-decoration:underline;text-decoration-thickness:1px;text-underline-offset:1px;">Fahrer</div>
<div class="r ln" style="left:713px;top:489px;width:727px;height:2px;background:#222;"></div>
<div class="t" style="left:713px;top:496.72px;font-size:13.33px;font-weight:bold;color:#000;text-decoration:underline;text-decoration-thickness:1px;text-underline-offset:1px;">Bemerkungen</div>
<div class="r ln" style="left:1076px;top:499px;width:2px;height:119px;background:#222;"></div>
<div class="t" style="left:1083.5px;top:496.72px;font-size:13.33px;font-weight:bold;color:#000;text-decoration:underline;text-decoration-thickness:1px;text-underline-offset:1px;">Zusatzangabe</div>
<div class="t" style="left:1088px;top:515.72px;font-size:13.33px;font-weight:normal;color:#000;">Frei KM:</div>
<div class="t" style="right:386px;top:515.72px;font-size:13.33px;font-weight:normal;color:#000;">400</div>
<div class="t" style="left:1088px;top:532.72px;font-size:13.33px;font-weight:normal;color:#000;">Preis p. Zus-KM (inkl. USt.):</div>
<div class="t" style="right:386px;top:532.72px;font-size:13.33px;font-weight:normal;color:#000;">0,30 €</div>
<div class="t" style="left:1088px;top:574.72px;font-size:13.33px;font-weight:normal;color:#000;">Tankstand</div>
<div class="t" style="left:1175px;top:574.72px;font-size:13.33px;font-weight:normal;color:#000;">Abfahrt</div>
<div class="r ln" style="left:713px;top:627px;width:727px;height:2px;background:#222;"></div>
<div class="t" style="left:713px;top:635.72px;font-size:13.33px;font-weight:bold;color:#000;">Pos</div>
<div class="t" style="left:742px;top:635.72px;font-size:13.33px;font-weight:bold;color:#000;">Beschreibung</div>
<div class="t" style="right:736px;top:635.72px;font-size:13.33px;font-weight:bold;color:#000;">Berechnet</div>
<div class="t" style="right:634px;top:635.72px;font-size:13.33px;font-weight:bold;color:#000;">Einheit</div>
<div class="t" style="right:530px;top:635.72px;font-size:13.33px;font-weight:bold;color:#000;">Einzelpreis</div>
<div class="t" style="right:470px;top:635.72px;font-size:13.33px;font-weight:bold;color:#000;">%</div>
<div class="t" style="right:379px;top:635.72px;font-size:13.33px;font-weight:bold;color:#000;">Gesamt</div>
<div class="r ln" style="left:713px;top:652px;width:725px;height:2px;background:#222;"></div>
<div class="t" style="left:713px;top:655.72px;font-size:13.33px;font-weight:normal;color:#000;">1</div>
<div class="t" style="left:742px;top:655.72px;font-size:13.33px;font-weight:normal;color:#000;">Angebot Pritsche</div>
<div class="t" style="right:736px;top:655.72px;font-size:13.33px;font-weight:normal;color:#000;">4,00</div>
<div class="t" style="right:634px;top:655.72px;font-size:13.33px;font-weight:normal;color:#000;">Tage</div>
<div class="t" style="right:530px;top:655.72px;font-size:13.33px;font-weight:normal;color:#000;">300,00 €</div>
<div class="t" style="right:379px;top:655.72px;font-size:13.33px;font-weight:normal;color:#000;">1.200,00 €</div>
<div class="r ln" style="left:713px;top:671px;width:725px;height:2px;background:#222;"></div>
<div class="t" style="left:742px;top:679.72px;font-size:13.33px;font-weight:normal;color:#000;">Nettosumme</div>
<div class="t" style="right:379px;top:679.72px;font-size:13.33px;font-weight:normal;color:#000;">1.200,00 €</div>
<div class="t" style="left:742px;top:696.72px;font-size:13.33px;font-weight:normal;color:#000;">Umsatzsteuer 19 %</div>
<div class="t" style="right:530px;top:696.72px;font-size:13.33px;font-weight:normal;color:#000;">1.200,00 €</div>
<div class="t" style="right:470px;top:696.72px;font-size:13.33px;font-weight:normal;color:#000;">19,00</div>
<div class="t" style="right:379px;top:696.72px;font-size:13.33px;font-weight:normal;color:#000;">228,00 €</div>
<div class="t" style="left:742px;top:713.72px;font-size:13.33px;font-weight:bold;color:#000;">Endsumme</div>
<div class="t" style="right:379px;top:713.72px;font-size:13.33px;font-weight:bold;color:#000;">1.428,00 €</div>
<div class="r ln" style="left:713px;top:743px;width:727px;height:2px;background:#222;"></div>
<div class="t" style="left:1120px;top:745.72px;font-size:13.33px;font-weight:bold;color:#000;text-decoration:underline;text-decoration-thickness:1px;text-underline-offset:1px;">Schadenliste</div>
<div class="t" style="left:1120px;top:880.72px;font-size:13.33px;font-weight:normal;color:#000;">X = bekannte Schäden</div>
<div class="r ln" style="left:713px;top:898px;width:727px;height:2px;background:#222;"></div>
<div class="t" style="left:713px;top:904.97px;font-size:10.67px;font-weight:normal;color:#000;">Keine Einreise nach: Polen, Slowakei, Tschechien, Kroatien, Slowenien,</div>
<div class="t" style="left:713px;top:916.87px;font-size:10.67px;font-weight:normal;color:#000;">Bosnien, Ungarn, Rumänien, Bulgarien, Jugoslawien, Albanien,</div>
<div class="t" style="left:713px;top:928.77px;font-size:10.67px;font-weight:normal;color:#000;">Mazedonien, Griechenland, Türkei und alle Länder des ehemaligen</div>
<div class="t" style="left:713px;top:940.67px;font-size:10.67px;font-weight:normal;color:#000;">Ostblocks. Keine Einreise nach Italien mit: Mercedes C-,E- und S-Klasse,</div>
<div class="r ln" style="left:1076px;top:906px;width:2px;height:49px;background:#222;"></div>
<div class="t" style="left:1087px;top:905.72px;font-size:13.33px;font-weight:bold;color:#000;">Achtung!</div>
<div class="t" style="left:1167px;top:911.10px;font-size:9.33px;font-weight:normal;color:#000;">Der Mietpreis besteht aus der Grundgebühr sowie</div>
<div class="t" style="left:1087px;top:923.10px;font-size:9.33px;font-weight:normal;color:#000;">weiteren zubuchbaren Optionen. Das Fahrzeug ist bei selbstverschuldeten Unfällen</div>
<div class="t" style="left:1087px;top:934.10px;font-size:9.33px;font-weight:normal;color:#000;">des Mieter kasko- bzw. eigenversichert, jedoch mit einer Selbstbeteiligung des</div>
<div class="t" style="left:1087px;top:945.10px;font-size:9.33px;font-weight:normal;color:#000;">Mieters in Höhe von 1.000,00 € pro Schadensfall. Der Mieter macht Gebrauch von</div>
<div class="t" style="left:713px;top:952.57px;font-size:10.67px;font-weight:normal;color:#000;">sowie Mercedes Sprinter, Porsche, BMW und Audi.</div>
<div class="t" style="left:1087px;top:955.10px;font-size:9.33px;font-weight:normal;color:#000;">zusätzlichen Leistungen wie z.B. Versicherungen, Navigationsgeräte etc.</div>
<div class="r" style="left:889px;top:972px;width:178px;height:38px;background:#fff;border:9px solid #000;border-bottom-width:12px"></div>
<div class="r" style="left:1256px;top:972px;width:178px;height:38px;background:#fff;border:9px solid #000;border-bottom-width:12px"></div>
<div class="r ln" style="left:1076px;top:955px;width:4px;height:60px;background:#222;"></div>
<div class="r ln" style="left:1084px;top:984px;width:12px;height:10px;background:#000;border-radius:6px"></div>
<div class="r ln" style="left:1165px;top:984px;width:14px;height:10px;background:#000;border-radius:3px"></div>
<div class="t" style="left:889px;top:1005.23px;font-size:8px;font-weight:normal;color:#000;">Datum</div>
<div class="t" style="left:1256px;top:1005.23px;font-size:8px;font-weight:normal;color:#000;">Unterschrift</div>
<div class="r ln" style="left:713px;top:1035px;width:727px;height:7px;background:#222;"></div>
<div class="r" style="left:717px;top:1046px;width:173px;height:36px;background:#cccccc;"></div>
<div class="t" style="left:503px;width:600px;text-align:center;top:1058.97px;font-size:10.67px;font-weight:normal;color:#000;">Rückgabe</div>
<div class="r" style="left:895px;top:1043px;width:182px;height:48px;background:#fff;border:9px solid #000;border-bottom-width:13px"></div>
<div class="r" style="left:1079px;top:1043px;width:177px;height:48px;background:#fff;border:9px solid #000;border-bottom-width:13px"></div>
<div class="r" style="left:1256px;top:1043px;width:177px;height:48px;background:#fff;border:9px solid #000;border-bottom-width:13px"></div>
<div class="t" style="left:720px;top:1088.23px;font-size:8px;font-weight:normal;color:#000;">Datum</div>
<div class="t" style="left:897px;top:1088.23px;font-size:8px;font-weight:normal;color:#000;">KM-Stand</div>
<div class="t" style="left:1081px;top:1088.23px;font-size:8px;font-weight:normal;color:#000;">Tankstand</div>
<div class="t" style="left:1258px;top:1088.23px;font-size:8px;font-weight:normal;color:#000;">Unterschrift</div>
<svg style="position:absolute;left:1340px;top:135px" width="90" height="75" viewBox="0 0 90 75">
  <path fill-rule="evenodd" fill="#1a1a1a" d="M31.5 15.6 C18 15.6 7.4 24.6 7.4 36.5 C7.4 48.4 18 57.4 31.5 57.4 C36 57.4 40 56.4 43 54.6 L43 18.4 C40 16.6 36 15.6 31.5 15.6 Z M31.5 22.3 C24 22.3 18.8 28.6 18.8 36.2 C18.8 43.8 24 50 31.5 50 C36 50 40 48 43 45 L43 27.4 C40 24.3 36 22.3 31.5 22.3 Z"/>
  <path fill="#e30613" d="M35.4 16.1 H47.9 L54.1 27.4 L60.9 16.1 H72.7 L60.7 35.4 L73.4 57 H60.8 L53.5 44 L46.7 57 H33.8 L46.5 35.6 Z"/>
  <text x="74.6" y="20" font-family="Liberation Sans" font-size="19" fill="#1a1a1a" stroke="#fff" stroke-width="0.3">9</text>
  <text x="35.3" y="67.6" font-family="Liberation Sans" font-size="13" fill="#1a1a1a" textLength="47.5" lengthAdjust="spacingAndGlyphs">systems</text>
</svg>
<svg style="position:absolute;left:1220px;top:568px" width="65" height="60" viewBox="0 0 65 60">
  <circle cx="31.4" cy="30.9" r="25.1" fill="none" stroke="#000" stroke-width="1.1"/>
  <g stroke="#000" stroke-linecap="butt">
    <line x1="31.2" y1="6" x2="31.2" y2="13.5" stroke-width="1.6"/>
    <line x1="8" y1="23.2" x2="12" y2="26.7" stroke-width="1.6"/>
    <line x1="13.5" y1="17.5" x2="14.8" y2="19.6" stroke-width="0.9"/>
    <line x1="18.5" y1="11.5" x2="19.5" y2="14.5" stroke-width="0.9"/>
    <line x1="24" y1="8.5" x2="24.5" y2="12.5" stroke-width="0.9"/>
    <line x1="38.8" y1="8.5" x2="38.2" y2="12.5" stroke-width="0.9"/>
    <line x1="45" y1="11.5" x2="44" y2="14.5" stroke-width="0.9"/>
    <line x1="50" y1="17" x2="48.5" y2="19.5" stroke-width="0.9"/>
    <line x1="31.4" y1="45.5" x2="55" y2="22.9" stroke-width="2"/>
  </g>
  <circle cx="31.4" cy="45.5" r="2.8" fill="none" stroke="#000" stroke-width="0.8"/>
  <text x="27" y="19.6" font-family="Liberation Sans" font-size="6.5" fill="#000">1/2</text>
  <text x="12" y="33.5" font-family="Liberation Sans" font-size="6.5" fill="#000">0</text>
  <text x="46.6" y="33.8" font-family="Liberation Sans" font-size="6.5" fill="#000">1/1</text>
</svg>
<svg style="position:absolute;left:740px;top:745px" width="345" height="155" viewBox="0 0 345 155">
<defs>
  <g id="side2">
    <!-- side view facing right, local 162x59 -->
    <path d="M17 2.2 C40 1 70 1.5 92 3.8 C102 6 112 13 119 18.5 C132 21 146 24 152 27 C157 30 160 33 161 37 L161.5 46 C160 48.5 157 49 154 49 L146 49 A15 15 0 0 0 117 49 L41.5 49.8 A15 15 0 0 0 13 47.5 L12.5 49 C6 48 2 46 1 43 L0.5 31 C1 25 3 21 5 17 C9 10 13 5 17 2.2 Z" fill="#fff" stroke="#333" stroke-width="0.7"/>
    <path d="M1.2 38.2 L13 38.2 L14 48.8 L6 48.5 C3 47 1.5 45 1.2 42 Z" fill="#9a9a9a"/>
    <path d="M17.5 3.5 C14 7 10 12 7 16 L12 16.5 C14 11 16.5 7 19 4.5Z" fill="#555"/>
    <path d="M4 18 L12 17.5 L14 26.6 L4.5 26.6 Z" fill="#d40000"/>
    <path d="M12 17.5 L14 26.6 L16 26.6 L13.5 20Z" fill="#333"/>
    <path d="M30 4.3 L41 4 L41 17.6 L29 17 C28 12 28.5 7 30 4.3Z" fill="#e2e2e2" stroke="#333" stroke-width="0.9"/>
    <path d="M41.5 4 L65.5 4.2 L65.5 19.2 L41.5 17.8 Z" fill="#e2e2e2" stroke="#333" stroke-width="0.6"/>
    <path d="M65.5 3.2 L71.5 3.4 L71.8 19.6 L65.5 19.2Z" fill="#444"/>
    <path d="M71.5 4 C82 4.5 92 5.5 98 8.5 C106 12 112 17 117.5 22 L117.5 23 L71.8 19.6 Z" fill="#e2e2e2" stroke="#333" stroke-width="0.9"/>
    <path d="M107 18 C108 15.5 111.5 15.5 112.5 18.5 L112 21 L106.5 21Z" fill="#fff" stroke="#555" stroke-width="0.5"/>
    <path d="M106.5 20 L112 20.5 L112 22 L106.5 21.5Z" fill="#d9822b"/>
    <path d="M28.5 17.5 C31 27 36 40 41.5 49" fill="none" stroke="#777" stroke-width="0.6"/>
    <path d="M71.8 19.6 L72.5 49" fill="none" stroke="#777" stroke-width="0.6"/>
    <path d="M117.5 22.5 L117 49" fill="none" stroke="#777" stroke-width="0.6"/>
    <path d="M45 34 L110 37" stroke="#cfcfcf" stroke-width="1.4"/>
    <path d="M14 12 L120 21" stroke="#aaa" stroke-width="0.4"/>
    <path d="M146 27.5 C150 28 153 30 155 33 L154 34.5 C151 34.5 148 32 146 27.5Z" fill="#f3efc2" stroke="#555" stroke-width="0.5"/>
    <path d="M155 33 L156 34.5 L154 34.5Z" fill="#d9822b"/>
    <path d="M43 50.5 L118 51.5" stroke="#888" stroke-width="1.1"/>
    <path d="M12.5 47 A15 15 0 0 1 42.5 47" fill="none" stroke="#9a9a9a" stroke-width="1.6"/>
    <path d="M116 47 A15 15 0 0 1 146 47" fill="none" stroke="#9a9a9a" stroke-width="1.6"/>
    <circle cx="27.5" cy="46.8" r="12.6" fill="#000"/>
    <circle cx="27.5" cy="46.8" r="9.2" fill="#bdbdbd"/>
    <circle cx="27.5" cy="46.8" r="7.6" fill="#3a3a3a"/>
    <g stroke="#bdbdbd" stroke-width="2.4"><path d="M27.5 46.8 L27.5 38.5 M27.5 46.8 L35.4 44.2 M27.5 46.8 L32.4 53.5 M27.5 46.8 L22.6 53.5 M27.5 46.8 L19.6 44.2"/></g>
    <circle cx="27.5" cy="46.8" r="1.8" fill="#777"/>
    <circle cx="131" cy="46.8" r="12.6" fill="#000"/>
    <circle cx="131" cy="46.8" r="9.2" fill="#bdbdbd"/>
    <circle cx="131" cy="46.8" r="7.6" fill="#3a3a3a"/>
    <g stroke="#bdbdbd" stroke-width="2.4"><path d="M131 46.8 L131 38.5 M131 46.8 L138.9 44.2 M131 46.8 L135.9 53.5 M131 46.8 L126.1 53.5 M131 46.8 L123.1 44.2"/></g>
    <circle cx="131" cy="46.8" r="1.8" fill="#777"/>
  </g>
</defs>
<!-- top view -->
<g transform="translate(0,0)">
  <path d="M22 6.8 C60 5.5 120 5.5 158 7 C166 9 169 22 169 40 C169 58 166 73 158 75 C120 77 60 77 22 75.5 C12 73 8.5 58 8.5 41 C8.5 24 12 9 22 6.8Z" fill="#fff" stroke="#444" stroke-width="0.7"/>
  <path d="M62 1.8 L66.5 2.5 L64 8 L61 8Z" fill="#fff" stroke="#555" stroke-width="0.5"/>
  <path d="M62 81 L66.5 80 L64 74 L61 74Z" fill="#fff" stroke="#555" stroke-width="0.5"/>
  <path d="M52 14.3 C62 15.5 72 18 80.5 21.8 C78 32 77.5 50 80.5 60.5 C72 64 62 66.5 54 67.5 C48 60 45.5 50 45.5 41 C45.5 30 48 21 52 14.3Z" fill="#e4e4e4" stroke="#555" stroke-width="1.6"/>
  <path d="M52 14.3 C48 21 45.5 30 45.5 41 C45.5 50 48 60 54 67.5 L56.5 66.5 C51 58 49 50 49 41 C49 31 51 22 55.5 15Z" fill="#555"/>
  <path d="M80.5 21.8 L148 22.5 L148 58.5 L80.5 60.5 C77.5 50 78 32 80.5 21.8Z" fill="#fff" stroke="#888" stroke-width="0.6"/>
  <path d="M57 10 C75 12 90 13.5 100 13.7 L140 12.5 C140.5 16 139 19 137 19.5 L100 20.5 C85 20 70 18 62 16 Z" fill="#e4e4e4" stroke="#222" stroke-width="0.8"/>
  <path d="M97 12.5 L104 12.5 L105 20.5 L99 20.5Z" fill="#444"/>
  <path d="M57 72 C75 70 90 68.5 100 68.3 L140 69.5 C140.5 66 139 63 137 62.5 L100 61.5 C85 62 70 64 62 66 Z" fill="#e4e4e4" stroke="#222" stroke-width="0.8"/>
  <path d="M97 69.5 L104 69.5 L105 61.5 L99 61.5Z" fill="#444"/>
  <path d="M149 20.5 C155 23 160 30 160.5 41 C160 52 155 60 149 62.5 C151 52 151.5 30 149 20.5Z" fill="#e4e4e4" stroke="#555" stroke-width="1"/>
  <path d="M154.5 8.8 C160 9.3 164.5 13 166 23 L163 23.5 C160.5 18 157 14.5 154.5 13.8Z" fill="#e60000"/>
  <path d="M154.5 73.2 C160 72.7 164.5 69 166 59 L163 58.5 C160.5 64 157 67.5 154.5 68.2Z" fill="#e60000"/>
  <path d="M21.5 12 C23 13 23.5 15 22 17 L15 23.5 C13.5 24 12.5 23 13 21 C15 17 18 13 21.5 12Z" fill="#f6f2c8" stroke="#999" stroke-width="0.4"/>
  <path d="M21.5 70 C23 69 23.5 67 22 65 L15 58.5 C13.5 58 12.5 59 13 61 C15 65 18 69 21.5 70Z" fill="#f6f2c8" stroke="#999" stroke-width="0.4"/>
  <path d="M13 23 L15.5 23 L15.5 25 L13 24.5Z" fill="#d9822b"/>
  <path d="M13 59 L15.5 59 L15.5 57 L13 57.5Z" fill="#d9822b"/>
  <path d="M10.5 25 C9 35 9 47 10.5 57 L15.5 57 C14 47 14 35 15.5 25Z" fill="#333"/>
  <path d="M18 23 L48 17 M18 59 L48 65" stroke="#999" stroke-width="0.5"/>
</g>
<!-- side view top right -->
<use href="#side" transform="translate(175.3,10)"/>
<!-- side view bottom left (mirrored) -->
<use href="#side" transform="translate(169.6,88.2) scale(-1,1)"/>
<!-- rear view -->
<g transform="translate(179.6,87.2)">
  <path d="M17.4 0.6 C25 -0.3 50 -0.3 57 0.6 L63 15 L69 26 L71.3 32 L71 46.7 L63.6 46.7 L63.6 58.8 L70.8 58.8 L70.8 46.7 L3 46.7 L2 32 L4 26 L11 15Z" fill="#fff" stroke="#444" stroke-width="0.6"/>
  <path d="M16.4 3.9 L57.8 3.9 L62.7 15.4 L12.1 15.4Z" fill="#e2e2e2" stroke="#222" stroke-width="1.1"/>
  <path d="M27 1 L47 1 L46 2.5 L28 2.5Z" fill="#c00"/>
  <path d="M0.5 16.5 C1 14 4 13.5 7.3 14 L7.3 19.8 C4 20 1 19.5 0.5 16.5Z" fill="#fff" stroke="#555" stroke-width="0.6"/>
  <path d="M73.7 16.5 C73.2 14 70.2 13.5 66.7 14 L66.7 19.8 C70.2 20 73.2 19.5 73.7 16.5Z" fill="#fff" stroke="#555" stroke-width="0.6"/>
  <path d="M8 17 C13 16.5 18 17.5 20.3 21 C20 24 17 26 12 26 L5.8 25.5 C6 22 6.5 19 8 17Z" fill="#d40000"/>
  <path d="M66 17 C61 16.5 56 17.5 53.7 21 C54 24 57 26 62 26 L68.2 25.5 C68 22 67.5 19 66 17Z" fill="#d40000"/>
  <path d="M2.9 39 L70.8 39 L70.5 47 C65 49.5 50 50 37 50 C22 50 8 49.5 3 47Z" fill="#777"/>
  <path d="M15 29 C20 33 55 33 59 29" fill="none" stroke="#bbb" stroke-width="1.2"/>
  <rect x="25.6" y="36.6" width="23.6" height="5" rx="1" fill="#fff" stroke="#444" stroke-width="0.6"/>
  <circle cx="36.6" cy="22.2" r="2.8" fill="#ddd" stroke="#777" stroke-width="0.8"/>
  <rect x="2.4" y="46.7" width="7.7" height="12.1" rx="1.5" fill="#000"/>
  <rect x="63.6" y="46.7" width="7.2" height="12.1" rx="1.5" fill="#000"/>
</g>
<!-- front view -->
<g transform="translate(263,87.2)">
  <path d="M16.8 1 C25 0 50 0 57.3 1 L63.1 14 L69 22 L72.2 30 L72.2 50.6 L1.9 50.6 L1.9 30 L5 22 L11 14Z" fill="#fff" stroke="#444" stroke-width="0.6"/>
  <path d="M16.8 2.4 L57.3 2.4 L63.1 18.3 L11 18.3Z" fill="#e2e2e2" stroke="#222" stroke-width="1.3"/>
  <path d="M44 17 C46 14 51 14 53 17Z" fill="#555"/>
  <rect x="33" y="3" width="8" height="1.5" fill="#999"/>
  <path d="M0.4 16.5 C1 14.5 4 14 8.2 14.5 L8.2 19.8 C4 20 1 19.5 0.4 16.5Z" fill="#fff" stroke="#555" stroke-width="0.6"/>
  <path d="M73.7 16.5 C73.1 14.5 70.1 14 65.9 14.5 L65.9 19.8 C70.1 20 73.1 19.5 73.7 16.5Z" fill="#fff" stroke="#555" stroke-width="0.6"/>
  <path d="M0.5 18 L6 18 L6 19.5 L1 19.5Z" fill="#d9822b"/>
  <path d="M73.5 18 L68 18 L68 19.5 L73 19.5Z" fill="#d9822b"/>
  <path d="M6.2 28 C9 25.5 16 25.5 20.7 29.5 L20.7 33.5 C16 34.5 9 34.5 6.5 33Z" fill="#f3efc2" stroke="#333" stroke-width="0.8"/>
  <path d="M67.9 28 C65.1 25.5 58.1 25.5 53.4 29.5 L53.4 33.5 C58.1 34.5 65.1 34.5 67.6 33Z" fill="#f3efc2" stroke="#333" stroke-width="0.8"/>
  <path d="M12 33 L19 33 L19 35 L12 35Z M55 33 L62 33 L62 35 L55 35Z" fill="#d9822b"/>
  <path d="M22.1 30 L52 30 L50.5 34.2 L23.5 34.2Z" fill="#333"/>
  <circle cx="37" cy="32" r="1.8" fill="#aaa"/>
  <path d="M4 36 C10 35.5 15 35.5 20 36.5 M54 36.5 C59 35.5 64 35.5 70 36" stroke="#bbb" stroke-width="1.2" fill="none"/>
  <rect x="26" y="36.6" width="22.1" height="4.4" fill="#fff" stroke="#444" stroke-width="0.6"/>
  <rect x="22.1" y="42" width="30.4" height="6.7" fill="#333"/>
  <rect x="8.2" y="42" width="9.6" height="6.7" fill="#333"/>
  <rect x="55.8" y="42" width="9.7" height="6.7" fill="#333"/>
  <circle cx="10.5" cy="45.2" r="1.6" fill="#f3efc2"/>
  <circle cx="63.2" cy="45.2" r="1.6" fill="#f3efc2"/>
  <rect x="2.4" y="49.6" width="7.2" height="9.2" rx="1.5" fill="#000"/>
  <rect x="64.5" y="49.6" width="7.2" height="9.2" rx="1.5" fill="#000"/>
</g>
</svg>
</div></div></div>
  <svg class="abs" style="left:144px;top:189px" width="9" height="11" viewBox="0 0 9 11"><path d="M5.4 0.8V10" stroke="#fff" stroke-width="1.9"/><path d="M5.8 0.5L1.8 2.1V3.6L5.8 2.1Z" fill="#fff"/></svg>
</div>
<div id="main"></div>

<div id="page"><div style="position:absolute;left:-680px;top:-96px;width:1816px;height:1300px">
<div class="t" style="left:713px;top:123.62px;font-size:13.33px;font-weight:normal;color:#000;">Hamburg</div>
<div class="t" style="left:713px;top:141.06px;font-size:13.33px;font-weight:normal;color:#000;">Flughafenstr. 1-3 | 22335 Hamburg</div>
<div class="t" style="left:713px;top:158.50px;font-size:13.33px;font-weight:normal;color:#000;">Telefon: +49 571 / 97 21 80 04</div>
<div class="t" style="left:713px;top:175.94px;font-size:13.33px;font-weight:normal;color:#000;">Fax: null</div>
<div class="t" style="left:713px;top:193.38px;font-size:13.33px;font-weight:normal;color:#000;">E-Mail: support@cx9.de</div>
<div class="t" style="left:713px;top:210.82px;font-size:13.33px;font-weight:normal;color:#000;">Web: null</div>
<div class="t" style="left:713px;top:244.72px;font-size:13.33px;font-weight:normal;color:#000;">Fahrzeug</div>
<div class="t" style="right:750px;top:244.72px;font-size:13.33px;font-weight:normal;color:#000;">Kleinwagen</div>
<div class="t" style="left:713px;top:262.92px;font-size:13.33px;font-weight:normal;color:#000;">Kennzeichen</div>
<div class="t" style="right:750px;top:262.92px;font-size:13.33px;font-weight:normal;color:#000;">AA-CX 4</div>
<div class="t" style="left:713px;top:279.62px;font-size:13.33px;font-weight:normal;color:#000;">KM-Stand Abfahrt</div>
<div class="t" style="right:750px;top:279.62px;font-size:13.33px;font-weight:normal;color:#000;">25 km</div>
<div class="t" style="left:713px;top:297.02px;font-size:13.33px;font-weight:normal;color:#000;">Tankstand</div>
<div class="t" style="right:750px;top:297.02px;font-size:13.33px;font-weight:normal;color:#000;">8</div>
<div class="t" style="left:713px;top:315.22px;font-size:13.33px;font-weight:normal;color:#000;">Abfahrtsstation</div>
<div class="t" style="right:750px;top:315.22px;font-size:13.33px;font-weight:normal;color:#000;">Flughafenstr. 1-3, 22335 Hamburg</div>
<div class="t" style="left:713px;top:331.92px;font-size:13.33px;font-weight:normal;color:#000;">Rückgabestation</div>
<div class="t" style="right:750px;top:331.92px;font-size:13.33px;font-weight:normal;color:#000;">Domkloster 4, 50667&nbsp; Köln</div>
<div class="r" style="left:1084px;top:229px;width:353px;height:27px;background:#c8c8c8;"></div>
<div class="t" style="left:960px;width:600px;text-align:center;top:235.58px;font-size:14.67px;font-weight:bold;color:#000;">Mietvertragsnummer: 40010</div>
<div class="t" style="left:1084px;top:262.92px;font-size:13.33px;font-weight:normal;color:#000;">Kundennummer</div>
<div class="t" style="right:380px;top:262.92px;font-size:13.33px;font-weight:normal;color:#000;">10026</div>
<div class="t" style="left:1084px;top:279.62px;font-size:13.33px;font-weight:normal;color:#000;">Kostenstelle</div>
<div class="t" style="left:1084px;top:297.02px;font-size:13.33px;font-weight:normal;color:#000;">Vom</div>
<div class="t" style="right:380px;top:297.02px;font-size:13.33px;font-weight:normal;color:#000;word-spacing:1.2px;">16.06.2023 / 13:00</div>
<div class="t" style="left:1084px;top:315.22px;font-size:13.33px;font-weight:normal;color:#000;">Bis zum (geplant)</div>
<div class="t" style="right:380px;top:315.22px;font-size:13.33px;font-weight:normal;color:#000;word-spacing:1.2px;">19.06.2023 / 13:30</div>
<div class="r ln" style="left:713px;top:354px;width:727px;height:2px;background:#222;"></div>
<div class="t" style="left:713px;top:358.72px;font-size:13.33px;font-weight:bold;color:#000;text-decoration:underline;text-decoration-thickness:1px;text-underline-offset:1px;">Mieter</div>
<div class="t" style="left:840px;top:358.72px;font-size:13.33px;font-weight:normal;color:#000;">Maximilian Mustermann</div>
<div class="t" style="left:713px;top:376.12px;font-size:13.33px;font-weight:normal;color:#000;">Name 2</div>
<div class="t" style="left:840px;top:376.12px;font-size:13.33px;font-weight:normal;color:#000;">Cx9 Systems GmbH</div>
<div class="t" style="left:713px;top:392.62px;font-size:13.33px;font-weight:normal;color:#000;">Strasse</div>
<div class="t" style="left:840px;top:392.62px;font-size:13.33px;font-weight:normal;color:#000;">Testweg</div>
<div class="t" style="left:713px;top:411.02px;font-size:13.33px;font-weight:normal;color:#000;">PLZ / Ort</div>
<div class="t" style="left:840px;top:411.02px;font-size:13.33px;font-weight:normal;color:#000;">32425 Minden</div>
<div class="t" style="left:713px;top:428.52px;font-size:13.33px;font-weight:normal;color:#000;">Telefonnr.</div>
<div class="t" style="left:840px;top:428.52px;font-size:13.33px;font-weight:normal;color:#000;">05711</div>
<div class="t" style="left:713px;top:445.42px;font-size:13.33px;font-weight:normal;color:#000;">Geburtsdatum</div>
<div class="t" style="left:713px;top:463.32px;font-size:13.33px;font-weight:normal;color:#000;">Führerscheinnr.</div>
<div class="t" style="left:929px;top:445.42px;font-size:13.33px;font-weight:normal;color:#000;">in</div>
<div class="r ln" style="left:1076px;top:361px;width:2px;height:120px;background:#222;"></div>
<div class="t" style="left:1087px;top:358.72px;font-size:13.33px;font-weight:bold;color:#000;text-decoration:underline;text-decoration-thickness:1px;text-underline-offset:1px;">Fahrer</div>
<div class="r ln" style="left:713px;top:489px;width:727px;height:2px;background:#222;"></div>
<div class="t" style="left:713px;top:496.72px;font-size:13.33px;font-weight:bold;color:#000;text-decoration:underline;text-decoration-thickness:1px;text-underline-offset:1px;">Bemerkungen</div>
<div class="r ln" style="left:1076px;top:499px;width:2px;height:119px;background:#222;"></div>
<div class="t" style="left:1083.5px;top:496.72px;font-size:13.33px;font-weight:bold;color:#000;text-decoration:underline;text-decoration-thickness:1px;text-underline-offset:1px;">Zusatzangabe</div>
<div class="t" style="left:1088px;top:515.72px;font-size:13.33px;font-weight:normal;color:#000;">Frei KM:</div>
<div class="t" style="right:386px;top:515.72px;font-size:13.33px;font-weight:normal;color:#000;">400</div>
<div class="t" style="left:1088px;top:532.72px;font-size:13.33px;font-weight:normal;color:#000;">Preis p. Zus-KM (inkl. USt.):</div>
<div class="t" style="right:386px;top:532.72px;font-size:13.33px;font-weight:normal;color:#000;">0,30 €</div>
<div class="t" style="left:1088px;top:574.72px;font-size:13.33px;font-weight:normal;color:#000;">Tankstand</div>
<div class="t" style="left:1175px;top:574.72px;font-size:13.33px;font-weight:normal;color:#000;">Abfahrt</div>
<div class="r ln" style="left:713px;top:627px;width:727px;height:2px;background:#222;"></div>
<div class="t" style="left:713px;top:635.72px;font-size:13.33px;font-weight:bold;color:#000;">Pos</div>
<div class="t" style="left:742px;top:635.72px;font-size:13.33px;font-weight:bold;color:#000;">Beschreibung</div>
<div class="t" style="right:736px;top:635.72px;font-size:13.33px;font-weight:bold;color:#000;">Berechnet</div>
<div class="t" style="right:634px;top:635.72px;font-size:13.33px;font-weight:bold;color:#000;">Einheit</div>
<div class="t" style="right:530px;top:635.72px;font-size:13.33px;font-weight:bold;color:#000;">Einzelpreis</div>
<div class="t" style="right:470px;top:635.72px;font-size:13.33px;font-weight:bold;color:#000;">%</div>
<div class="t" style="right:379px;top:635.72px;font-size:13.33px;font-weight:bold;color:#000;">Gesamt</div>
<div class="r ln" style="left:713px;top:652px;width:725px;height:2px;background:#222;"></div>
<div class="t" style="left:713px;top:655.72px;font-size:13.33px;font-weight:normal;color:#000;">1</div>
<div class="t" style="left:742px;top:655.72px;font-size:13.33px;font-weight:normal;color:#000;">Angebot Pritsche</div>
<div class="t" style="right:736px;top:655.72px;font-size:13.33px;font-weight:normal;color:#000;">4,00</div>
<div class="t" style="right:634px;top:655.72px;font-size:13.33px;font-weight:normal;color:#000;">Tage</div>
<div class="t" style="right:530px;top:655.72px;font-size:13.33px;font-weight:normal;color:#000;">300,00 €</div>
<div class="t" style="right:379px;top:655.72px;font-size:13.33px;font-weight:normal;color:#000;">1.200,00 €</div>
<div class="r ln" style="left:713px;top:671px;width:725px;height:2px;background:#222;"></div>
<div class="t" style="left:742px;top:679.72px;font-size:13.33px;font-weight:normal;color:#000;">Nettosumme</div>
<div class="t" style="right:379px;top:679.72px;font-size:13.33px;font-weight:normal;color:#000;">1.200,00 €</div>
<div class="t" style="left:742px;top:696.72px;font-size:13.33px;font-weight:normal;color:#000;">Umsatzsteuer 19 %</div>
<div class="t" style="right:530px;top:696.72px;font-size:13.33px;font-weight:normal;color:#000;">1.200,00 €</div>
<div class="t" style="right:470px;top:696.72px;font-size:13.33px;font-weight:normal;color:#000;">19,00</div>
<div class="t" style="right:379px;top:696.72px;font-size:13.33px;font-weight:normal;color:#000;">228,00 €</div>
<div class="t" style="left:742px;top:713.72px;font-size:13.33px;font-weight:bold;color:#000;">Endsumme</div>
<div class="t" style="right:379px;top:713.72px;font-size:13.33px;font-weight:bold;color:#000;">1.428,00 €</div>
<div class="r ln" style="left:713px;top:743px;width:727px;height:2px;background:#222;"></div>
<div class="t" style="left:1120px;top:745.72px;font-size:13.33px;font-weight:bold;color:#000;text-decoration:underline;text-decoration-thickness:1px;text-underline-offset:1px;">Schadenliste</div>
<div class="t" style="left:1120px;top:880.72px;font-size:13.33px;font-weight:normal;color:#000;">X = bekannte Schäden</div>
<div class="r ln" style="left:713px;top:898px;width:727px;height:2px;background:#222;"></div>
<div class="t" style="left:713px;top:904.97px;font-size:10.67px;font-weight:normal;color:#000;">Keine Einreise nach: Polen, Slowakei, Tschechien, Kroatien, Slowenien,</div>
<div class="t" style="left:713px;top:916.87px;font-size:10.67px;font-weight:normal;color:#000;">Bosnien, Ungarn, Rumänien, Bulgarien, Jugoslawien, Albanien,</div>
<div class="t" style="left:713px;top:928.77px;font-size:10.67px;font-weight:normal;color:#000;">Mazedonien, Griechenland, Türkei und alle Länder des ehemaligen</div>
<div class="t" style="left:713px;top:940.67px;font-size:10.67px;font-weight:normal;color:#000;">Ostblocks. Keine Einreise nach Italien mit: Mercedes C-,E- und S-Klasse,</div>
<div class="r ln" style="left:1076px;top:906px;width:2px;height:49px;background:#222;"></div>
<div class="t" style="left:1087px;top:905.72px;font-size:13.33px;font-weight:bold;color:#000;">Achtung!</div>
<div class="t" style="left:1167px;top:911.10px;font-size:9.33px;font-weight:normal;color:#000;">Der Mietpreis besteht aus der Grundgebühr sowie</div>
<div class="t" style="left:1087px;top:923.10px;font-size:9.33px;font-weight:normal;color:#000;">weiteren zubuchbaren Optionen. Das Fahrzeug ist bei selbstverschuldeten Unfällen</div>
<div class="t" style="left:1087px;top:934.10px;font-size:9.33px;font-weight:normal;color:#000;">des Mieter kasko- bzw. eigenversichert, jedoch mit einer Selbstbeteiligung des</div>
<div class="t" style="left:1087px;top:945.10px;font-size:9.33px;font-weight:normal;color:#000;">Mieters in Höhe von 1.000,00 € pro Schadensfall. Der Mieter macht Gebrauch von</div>
<div class="t" style="left:713px;top:952.57px;font-size:10.67px;font-weight:normal;color:#000;">sowie Mercedes Sprinter, Porsche, BMW und Audi.</div>
<div class="t" style="left:1087px;top:955.10px;font-size:9.33px;font-weight:normal;color:#000;">zusätzlichen Leistungen wie z.B. Versicherungen, Navigationsgeräte etc.</div>
<div class="r" style="left:889px;top:972px;width:178px;height:38px;background:#fff;border:9px solid #000;border-bottom-width:12px"></div>
<div class="r" style="left:1256px;top:972px;width:178px;height:38px;background:#fff;border:9px solid #000;border-bottom-width:12px"></div>
<div class="r ln" style="left:1076px;top:955px;width:4px;height:60px;background:#222;"></div>
<div class="r ln" style="left:1084px;top:984px;width:12px;height:10px;background:#000;border-radius:6px"></div>
<div class="r ln" style="left:1165px;top:984px;width:14px;height:10px;background:#000;border-radius:3px"></div>
<div class="t" style="left:889px;top:1005.23px;font-size:8px;font-weight:normal;color:#000;">Datum</div>
<div class="t" style="left:1256px;top:1005.23px;font-size:8px;font-weight:normal;color:#000;">Unterschrift</div>
<div class="r ln" style="left:713px;top:1035px;width:727px;height:7px;background:#222;"></div>
<div class="r" style="left:717px;top:1046px;width:173px;height:36px;background:#cccccc;"></div>
<div class="t" style="left:503px;width:600px;text-align:center;top:1058.97px;font-size:10.67px;font-weight:normal;color:#000;">Rückgabe</div>
<div class="r" style="left:895px;top:1043px;width:182px;height:48px;background:#fff;border:9px solid #000;border-bottom-width:13px"></div>
<div class="r" style="left:1079px;top:1043px;width:177px;height:48px;background:#fff;border:9px solid #000;border-bottom-width:13px"></div>
<div class="r" style="left:1256px;top:1043px;width:177px;height:48px;background:#fff;border:9px solid #000;border-bottom-width:13px"></div>
<div class="t" style="left:720px;top:1088.23px;font-size:8px;font-weight:normal;color:#000;">Datum</div>
<div class="t" style="left:897px;top:1088.23px;font-size:8px;font-weight:normal;color:#000;">KM-Stand</div>
<div class="t" style="left:1081px;top:1088.23px;font-size:8px;font-weight:normal;color:#000;">Tankstand</div>
<div class="t" style="left:1258px;top:1088.23px;font-size:8px;font-weight:normal;color:#000;">Unterschrift</div>
<svg style="position:absolute;left:1340px;top:135px" width="90" height="75" viewBox="0 0 90 75">
  <path fill-rule="evenodd" fill="#1a1a1a" d="M31.5 15.6 C18 15.6 7.4 24.6 7.4 36.5 C7.4 48.4 18 57.4 31.5 57.4 C36 57.4 40 56.4 43 54.6 L43 18.4 C40 16.6 36 15.6 31.5 15.6 Z M31.5 22.3 C24 22.3 18.8 28.6 18.8 36.2 C18.8 43.8 24 50 31.5 50 C36 50 40 48 43 45 L43 27.4 C40 24.3 36 22.3 31.5 22.3 Z"/>
  <path fill="#e30613" d="M35.4 16.1 H47.9 L54.1 27.4 L60.9 16.1 H72.7 L60.7 35.4 L73.4 57 H60.8 L53.5 44 L46.7 57 H33.8 L46.5 35.6 Z"/>
  <text x="74.6" y="20" font-family="Liberation Sans" font-size="19" fill="#1a1a1a" stroke="#fff" stroke-width="0.3">9</text>
  <text x="35.3" y="67.6" font-family="Liberation Sans" font-size="13" fill="#1a1a1a" textLength="47.5" lengthAdjust="spacingAndGlyphs">systems</text>
</svg>
<svg style="position:absolute;left:1220px;top:568px" width="65" height="60" viewBox="0 0 65 60">
  <circle cx="31.4" cy="30.9" r="25.1" fill="none" stroke="#000" stroke-width="1.1"/>
  <g stroke="#000" stroke-linecap="butt">
    <line x1="31.2" y1="6" x2="31.2" y2="13.5" stroke-width="1.6"/>
    <line x1="8" y1="23.2" x2="12" y2="26.7" stroke-width="1.6"/>
    <line x1="13.5" y1="17.5" x2="14.8" y2="19.6" stroke-width="0.9"/>
    <line x1="18.5" y1="11.5" x2="19.5" y2="14.5" stroke-width="0.9"/>
    <line x1="24" y1="8.5" x2="24.5" y2="12.5" stroke-width="0.9"/>
    <line x1="38.8" y1="8.5" x2="38.2" y2="12.5" stroke-width="0.9"/>
    <line x1="45" y1="11.5" x2="44" y2="14.5" stroke-width="0.9"/>
    <line x1="50" y1="17" x2="48.5" y2="19.5" stroke-width="0.9"/>
    <line x1="31.4" y1="45.5" x2="55" y2="22.9" stroke-width="2"/>
  </g>
  <circle cx="31.4" cy="45.5" r="2.8" fill="none" stroke="#000" stroke-width="0.8"/>
  <text x="27" y="19.6" font-family="Liberation Sans" font-size="6.5" fill="#000">1/2</text>
  <text x="12" y="33.5" font-family="Liberation Sans" font-size="6.5" fill="#000">0</text>
  <text x="46.6" y="33.8" font-family="Liberation Sans" font-size="6.5" fill="#000">1/1</text>
</svg>
<svg style="position:absolute;left:740px;top:745px" width="345" height="155" viewBox="0 0 345 155">
<defs>
  <g id="side">
    <!-- side view facing right, local 162x59 -->
    <path d="M17 2.2 C40 1 70 1.5 92 3.8 C102 6 112 13 119 18.5 C132 21 146 24 152 27 C157 30 160 33 161 37 L161.5 46 C160 48.5 157 49 154 49 L146 49 A15 15 0 0 0 117 49 L41.5 49.8 A15 15 0 0 0 13 47.5 L12.5 49 C6 48 2 46 1 43 L0.5 31 C1 25 3 21 5 17 C9 10 13 5 17 2.2 Z" fill="#fff" stroke="#333" stroke-width="0.7"/>
    <path d="M1.2 38.2 L13 38.2 L14 48.8 L6 48.5 C3 47 1.5 45 1.2 42 Z" fill="#9a9a9a"/>
    <path d="M17.5 3.5 C14 7 10 12 7 16 L12 16.5 C14 11 16.5 7 19 4.5Z" fill="#555"/>
    <path d="M4 18 L12 17.5 L14 26.6 L4.5 26.6 Z" fill="#d40000"/>
    <path d="M12 17.5 L14 26.6 L16 26.6 L13.5 20Z" fill="#333"/>
    <path d="M30 4.3 L41 4 L41 17.6 L29 17 C28 12 28.5 7 30 4.3Z" fill="#e2e2e2" stroke="#333" stroke-width="0.9"/>
    <path d="M41.5 4 L65.5 4.2 L65.5 19.2 L41.5 17.8 Z" fill="#e2e2e2" stroke="#333" stroke-width="0.6"/>
    <path d="M65.5 3.2 L71.5 3.4 L71.8 19.6 L65.5 19.2Z" fill="#444"/>
    <path d="M71.5 4 C82 4.5 92 5.5 98 8.5 C106 12 112 17 117.5 22 L117.5 23 L71.8 19.6 Z" fill="#e2e2e2" stroke="#333" stroke-width="0.9"/>
    <path d="M107 18 C108 15.5 111.5 15.5 112.5 18.5 L112 21 L106.5 21Z" fill="#fff" stroke="#555" stroke-width="0.5"/>
    <path d="M106.5 20 L112 20.5 L112 22 L106.5 21.5Z" fill="#d9822b"/>
    <path d="M28.5 17.5 C31 27 36 40 41.5 49" fill="none" stroke="#777" stroke-width="0.6"/>
    <path d="M71.8 19.6 L72.5 49" fill="none" stroke="#777" stroke-width="0.6"/>
    <path d="M117.5 22.5 L117 49" fill="none" stroke="#777" stroke-width="0.6"/>
    <path d="M45 34 L110 37" stroke="#cfcfcf" stroke-width="1.4"/>
    <path d="M14 12 L120 21" stroke="#aaa" stroke-width="0.4"/>
    <path d="M146 27.5 C150 28 153 30 155 33 L154 34.5 C151 34.5 148 32 146 27.5Z" fill="#f3efc2" stroke="#555" stroke-width="0.5"/>
    <path d="M155 33 L156 34.5 L154 34.5Z" fill="#d9822b"/>
    <path d="M43 50.5 L118 51.5" stroke="#888" stroke-width="1.1"/>
    <path d="M12.5 47 A15 15 0 0 1 42.5 47" fill="none" stroke="#9a9a9a" stroke-width="1.6"/>
    <path d="M116 47 A15 15 0 0 1 146 47" fill="none" stroke="#9a9a9a" stroke-width="1.6"/>
    <circle cx="27.5" cy="46.8" r="12.6" fill="#000"/>
    <circle cx="27.5" cy="46.8" r="9.2" fill="#bdbdbd"/>
    <circle cx="27.5" cy="46.8" r="7.6" fill="#3a3a3a"/>
    <g stroke="#bdbdbd" stroke-width="2.4"><path d="M27.5 46.8 L27.5 38.5 M27.5 46.8 L35.4 44.2 M27.5 46.8 L32.4 53.5 M27.5 46.8 L22.6 53.5 M27.5 46.8 L19.6 44.2"/></g>
    <circle cx="27.5" cy="46.8" r="1.8" fill="#777"/>
    <circle cx="131" cy="46.8" r="12.6" fill="#000"/>
    <circle cx="131" cy="46.8" r="9.2" fill="#bdbdbd"/>
    <circle cx="131" cy="46.8" r="7.6" fill="#3a3a3a"/>
    <g stroke="#bdbdbd" stroke-width="2.4"><path d="M131 46.8 L131 38.5 M131 46.8 L138.9 44.2 M131 46.8 L135.9 53.5 M131 46.8 L126.1 53.5 M131 46.8 L123.1 44.2"/></g>
    <circle cx="131" cy="46.8" r="1.8" fill="#777"/>
  </g>
</defs>
<!-- top view -->
<g transform="translate(0,0)">
  <path d="M22 6.8 C60 5.5 120 5.5 158 7 C166 9 169 22 169 40 C169 58 166 73 158 75 C120 77 60 77 22 75.5 C12 73 8.5 58 8.5 41 C8.5 24 12 9 22 6.8Z" fill="#fff" stroke="#444" stroke-width="0.7"/>
  <path d="M62 1.8 L66.5 2.5 L64 8 L61 8Z" fill="#fff" stroke="#555" stroke-width="0.5"/>
  <path d="M62 81 L66.5 80 L64 74 L61 74Z" fill="#fff" stroke="#555" stroke-width="0.5"/>
  <path d="M52 14.3 C62 15.5 72 18 80.5 21.8 C78 32 77.5 50 80.5 60.5 C72 64 62 66.5 54 67.5 C48 60 45.5 50 45.5 41 C45.5 30 48 21 52 14.3Z" fill="#e4e4e4" stroke="#555" stroke-width="1.6"/>
  <path d="M52 14.3 C48 21 45.5 30 45.5 41 C45.5 50 48 60 54 67.5 L56.5 66.5 C51 58 49 50 49 41 C49 31 51 22 55.5 15Z" fill="#555"/>
  <path d="M80.5 21.8 L148 22.5 L148 58.5 L80.5 60.5 C77.5 50 78 32 80.5 21.8Z" fill="#fff" stroke="#888" stroke-width="0.6"/>
  <path d="M57 10 C75 12 90 13.5 100 13.7 L140 12.5 C140.5 16 139 19 137 19.5 L100 20.5 C85 20 70 18 62 16 Z" fill="#e4e4e4" stroke="#222" stroke-width="0.8"/>
  <path d="M97 12.5 L104 12.5 L105 20.5 L99 20.5Z" fill="#444"/>
  <path d="M57 72 C75 70 90 68.5 100 68.3 L140 69.5 C140.5 66 139 63 137 62.5 L100 61.5 C85 62 70 64 62 66 Z" fill="#e4e4e4" stroke="#222" stroke-width="0.8"/>
  <path d="M97 69.5 L104 69.5 L105 61.5 L99 61.5Z" fill="#444"/>
  <path d="M149 20.5 C155 23 160 30 160.5 41 C160 52 155 60 149 62.5 C151 52 151.5 30 149 20.5Z" fill="#e4e4e4" stroke="#555" stroke-width="1"/>
  <path d="M154.5 8.8 C160 9.3 164.5 13 166 23 L163 23.5 C160.5 18 157 14.5 154.5 13.8Z" fill="#e60000"/>
  <path d="M154.5 73.2 C160 72.7 164.5 69 166 59 L163 58.5 C160.5 64 157 67.5 154.5 68.2Z" fill="#e60000"/>
  <path d="M21.5 12 C23 13 23.5 15 22 17 L15 23.5 C13.5 24 12.5 23 13 21 C15 17 18 13 21.5 12Z" fill="#f6f2c8" stroke="#999" stroke-width="0.4"/>
  <path d="M21.5 70 C23 69 23.5 67 22 65 L15 58.5 C13.5 58 12.5 59 13 61 C15 65 18 69 21.5 70Z" fill="#f6f2c8" stroke="#999" stroke-width="0.4"/>
  <path d="M13 23 L15.5 23 L15.5 25 L13 24.5Z" fill="#d9822b"/>
  <path d="M13 59 L15.5 59 L15.5 57 L13 57.5Z" fill="#d9822b"/>
  <path d="M10.5 25 C9 35 9 47 10.5 57 L15.5 57 C14 47 14 35 15.5 25Z" fill="#333"/>
  <path d="M18 23 L48 17 M18 59 L48 65" stroke="#999" stroke-width="0.5"/>
</g>
<!-- side view top right -->
<use href="#side" transform="translate(175.3,10)"/>
<!-- side view bottom left (mirrored) -->
<use href="#side" transform="translate(169.6,88.2) scale(-1,1)"/>
<!-- rear view -->
<g transform="translate(179.6,87.2)">
  <path d="M17.4 0.6 C25 -0.3 50 -0.3 57 0.6 L63 15 L69 26 L71.3 32 L71 46.7 L63.6 46.7 L63.6 58.8 L70.8 58.8 L70.8 46.7 L3 46.7 L2 32 L4 26 L11 15Z" fill="#fff" stroke="#444" stroke-width="0.6"/>
  <path d="M16.4 3.9 L57.8 3.9 L62.7 15.4 L12.1 15.4Z" fill="#e2e2e2" stroke="#222" stroke-width="1.1"/>
  <path d="M27 1 L47 1 L46 2.5 L28 2.5Z" fill="#c00"/>
  <path d="M0.5 16.5 C1 14 4 13.5 7.3 14 L7.3 19.8 C4 20 1 19.5 0.5 16.5Z" fill="#fff" stroke="#555" stroke-width="0.6"/>
  <path d="M73.7 16.5 C73.2 14 70.2 13.5 66.7 14 L66.7 19.8 C70.2 20 73.2 19.5 73.7 16.5Z" fill="#fff" stroke="#555" stroke-width="0.6"/>
  <path d="M8 17 C13 16.5 18 17.5 20.3 21 C20 24 17 26 12 26 L5.8 25.5 C6 22 6.5 19 8 17Z" fill="#d40000"/>
  <path d="M66 17 C61 16.5 56 17.5 53.7 21 C54 24 57 26 62 26 L68.2 25.5 C68 22 67.5 19 66 17Z" fill="#d40000"/>
  <path d="M2.9 39 L70.8 39 L70.5 47 C65 49.5 50 50 37 50 C22 50 8 49.5 3 47Z" fill="#777"/>
  <path d="M15 29 C20 33 55 33 59 29" fill="none" stroke="#bbb" stroke-width="1.2"/>
  <rect x="25.6" y="36.6" width="23.6" height="5" rx="1" fill="#fff" stroke="#444" stroke-width="0.6"/>
  <circle cx="36.6" cy="22.2" r="2.8" fill="#ddd" stroke="#777" stroke-width="0.8"/>
  <rect x="2.4" y="46.7" width="7.7" height="12.1" rx="1.5" fill="#000"/>
  <rect x="63.6" y="46.7" width="7.2" height="12.1" rx="1.5" fill="#000"/>
</g>
<!-- front view -->
<g transform="translate(263,87.2)">
  <path d="M16.8 1 C25 0 50 0 57.3 1 L63.1 14 L69 22 L72.2 30 L72.2 50.6 L1.9 50.6 L1.9 30 L5 22 L11 14Z" fill="#fff" stroke="#444" stroke-width="0.6"/>
  <path d="M16.8 2.4 L57.3 2.4 L63.1 18.3 L11 18.3Z" fill="#e2e2e2" stroke="#222" stroke-width="1.3"/>
  <path d="M44 17 C46 14 51 14 53 17Z" fill="#555"/>
  <rect x="33" y="3" width="8" height="1.5" fill="#999"/>
  <path d="M0.4 16.5 C1 14.5 4 14 8.2 14.5 L8.2 19.8 C4 20 1 19.5 0.4 16.5Z" fill="#fff" stroke="#555" stroke-width="0.6"/>
  <path d="M73.7 16.5 C73.1 14.5 70.1 14 65.9 14.5 L65.9 19.8 C70.1 20 73.1 19.5 73.7 16.5Z" fill="#fff" stroke="#555" stroke-width="0.6"/>
  <path d="M0.5 18 L6 18 L6 19.5 L1 19.5Z" fill="#d9822b"/>
  <path d="M73.5 18 L68 18 L68 19.5 L73 19.5Z" fill="#d9822b"/>
  <path d="M6.2 28 C9 25.5 16 25.5 20.7 29.5 L20.7 33.5 C16 34.5 9 34.5 6.5 33Z" fill="#f3efc2" stroke="#333" stroke-width="0.8"/>
  <path d="M67.9 28 C65.1 25.5 58.1 25.5 53.4 29.5 L53.4 33.5 C58.1 34.5 65.1 34.5 67.6 33Z" fill="#f3efc2" stroke="#333" stroke-width="0.8"/>
  <path d="M12 33 L19 33 L19 35 L12 35Z M55 33 L62 33 L62 35 L55 35Z" fill="#d9822b"/>
  <path d="M22.1 30 L52 30 L50.5 34.2 L23.5 34.2Z" fill="#333"/>
  <circle cx="37" cy="32" r="1.8" fill="#aaa"/>
  <path d="M4 36 C10 35.5 15 35.5 20 36.5 M54 36.5 C59 35.5 64 35.5 70 36" stroke="#bbb" stroke-width="1.2" fill="none"/>
  <rect x="26" y="36.6" width="22.1" height="4.4" fill="#fff" stroke="#444" stroke-width="0.6"/>
  <rect x="22.1" y="42" width="30.4" height="6.7" fill="#333"/>
  <rect x="8.2" y="42" width="9.6" height="6.7" fill="#333"/>
  <rect x="55.8" y="42" width="9.7" height="6.7" fill="#333"/>
  <circle cx="10.5" cy="45.2" r="1.6" fill="#f3efc2"/>
  <circle cx="63.2" cy="45.2" r="1.6" fill="#f3efc2"/>
  <rect x="2.4" y="49.6" width="7.2" height="9.2" rx="1.5" fill="#000"/>
  <rect x="64.5" y="49.6" width="7.2" height="9.2" rx="1.5" fill="#000"/>
</g>
</svg>

</div></div>

<div class="r" style="left:0;top:953px;width:1816px;height:1px;background:#1e88e5;z-index:9"></div>
<div class="r" style="left:0;top:954px;width:1816px;height:1px;background:#202124;z-index:9;overflow:hidden"><div style="position:absolute;left:1597px;top:-3px;font-size:20px;line-height:20px;color:#cfcfcf;white-space:nowrap">Windows aktivieren</div></div>
</body></html>
